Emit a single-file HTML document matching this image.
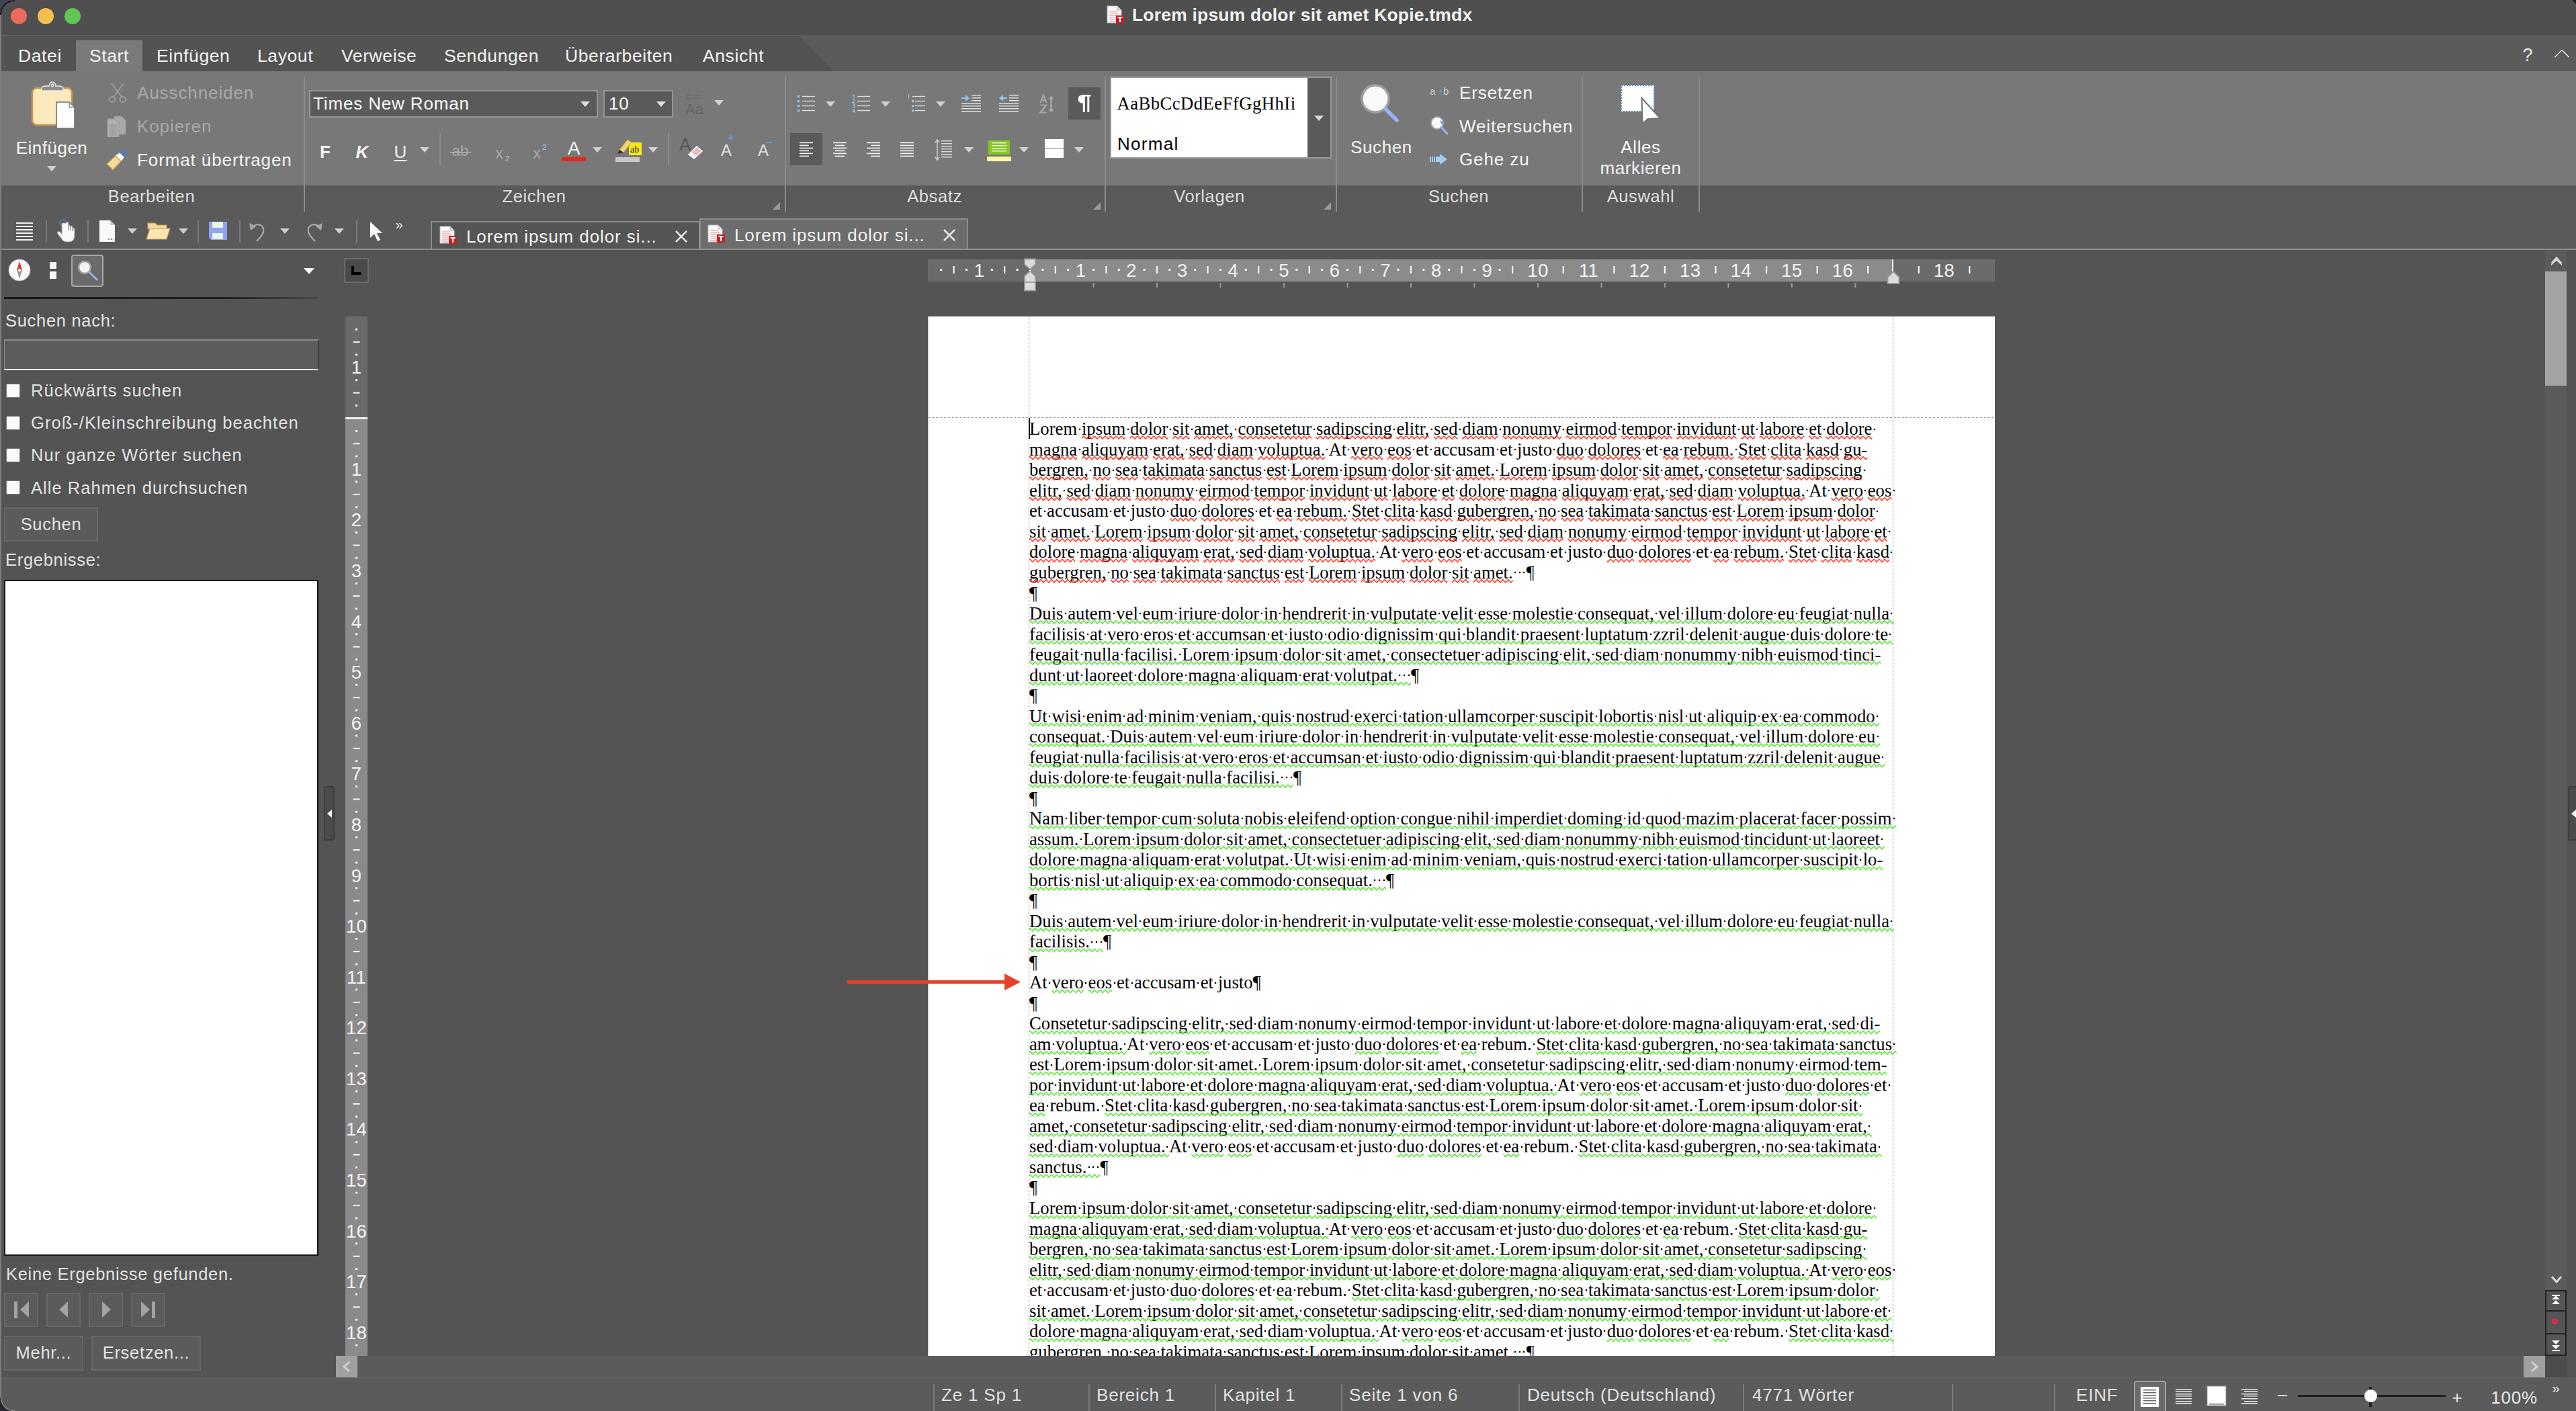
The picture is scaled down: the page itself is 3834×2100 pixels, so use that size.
<!DOCTYPE html>
<html><head><meta charset="utf-8"><style>
*{box-sizing:border-box}
html,body{margin:0;padding:0}
body{width:3834px;height:2100px;overflow:hidden;position:relative;background:#545454;font-family:"Liberation Sans",sans-serif;color:#eee}
.a{position:absolute}
.t{position:absolute;white-space:pre;line-height:1}
.sep{position:absolute;width:2px;background:#8a8a8a}
.tri{position:absolute;width:0;height:0;border-left:8px solid transparent;border-right:8px solid transparent;border-top:9px solid #d4d4d4}
#doc{position:absolute;left:1532.6px;top:622.4px;font-family:"Liberation Serif",serif;font-size:26.6667px;letter-spacing:0.03px;line-height:30.53px;color:#000;white-space:pre}
#doc div{height:30.53px}
#doc b{font-weight:normal;background:radial-gradient(circle,#000 0,#000 0.9px,rgba(0,0,0,0) 1.7px) no-repeat;background-size:4px 4px;background-position:50% 13.3px}
#doc u{text-decoration:none}
#doc s{text-decoration:none}
.ui{font-size:26px;color:#f2f2f2}
.lbl{font-size:25.5px;color:#dcdcdc}
</style></head><body>
<div class="a" style="left:0px;top:106px;width:3834px;height:170px;background:#787878;"></div>
<div class="a" style="left:0px;top:276px;width:3834px;height:95px;background:#5a5a5a;"></div>
<div class="a" style="left:0px;top:370px;width:3834px;height:2px;background:#8d8d8d;"></div>
<div class="a" style="left:452px;top:114px;width:2px;height:201px;background:#8c8c8c;"></div>
<div class="a" style="left:1168px;top:114px;width:2px;height:201px;background:#8c8c8c;"></div>
<div class="a" style="left:1644px;top:114px;width:2px;height:201px;background:#8c8c8c;"></div>
<div class="a" style="left:1988px;top:114px;width:2px;height:201px;background:#8c8c8c;"></div>
<div class="a" style="left:2354px;top:114px;width:2px;height:201px;background:#8c8c8c;"></div>
<div class="a" style="left:2528px;top:114px;width:2px;height:201px;background:#8c8c8c;"></div>
<div class="t" style="top:280.41px;font-size:25.5px;color:#dedede;letter-spacing:0.6px;left:-274.50px;width:1000px;text-align:center;">Bearbeiten</div>
<div class="t" style="top:280.41px;font-size:25.5px;color:#dedede;letter-spacing:0.6px;left:295.00px;width:1000px;text-align:center;">Zeichen</div>
<div class="t" style="top:280.41px;font-size:25.5px;color:#dedede;letter-spacing:0.6px;left:891.00px;width:1000px;text-align:center;">Absatz</div>
<div class="t" style="top:280.41px;font-size:25.5px;color:#dedede;letter-spacing:0.6px;left:1300.00px;width:1000px;text-align:center;">Vorlagen</div>
<div class="t" style="top:280.41px;font-size:25.5px;color:#dedede;letter-spacing:0.6px;left:1671.00px;width:1000px;text-align:center;">Suchen</div>
<div class="t" style="top:280.41px;font-size:25.5px;color:#dedede;letter-spacing:0.6px;left:1942.00px;width:1000px;text-align:center;">Auswahl</div>
<svg class="a" style="left:1150px;top:301px;" width="12" height="12" viewBox="0 0 12 12"><path d="M11 0V11H0z" fill="#9a9a9a"/></svg>
<svg class="a" style="left:1627px;top:301px;" width="12" height="12" viewBox="0 0 12 12"><path d="M11 0V11H0z" fill="#9a9a9a"/></svg>
<svg class="a" style="left:1970px;top:301px;" width="12" height="12" viewBox="0 0 12 12"><path d="M11 0V11H0z" fill="#9a9a9a"/></svg>
<svg class="a" style="left:44px;top:118px;" width="72" height="76" viewBox="0 0 72 76"><rect x="4" y="13" width="59" height="55" rx="7" fill="#fce9bd" stroke="#c9964d" stroke-width="2.5"/><path d="M18 17v-3c0-3 3-4 6-4h5c0-4 3-6 5-6s5 2 5 6h5c3 0 6 1 6 4v3z" fill="#8c8c8c" stroke="#e8e8e8" stroke-width="1.3"/><circle cx="34" cy="9" r="1.8" fill="none" stroke="#e8e8e8" stroke-width="1.2"/><path d="M40 34h19l8 8v31H40z" fill="#ffffff" stroke="#707070" stroke-width="1.6"/><path d="M59 34v8h8z" fill="#dddddd" stroke="#707070" stroke-width="1"/></svg>
<div class="t" style="top:206.59px;font-size:26px;color:#f6f6f6;letter-spacing:0.5px;left:-423.00px;width:1000px;text-align:center;">Einfügen</div>
<div class="a" style="left:70.0px;top:247.0px;width:0;height:0;border-left:7.0px solid transparent;border-right:7.0px solid transparent;border-top:8.0px solid #d0d0d0"></div>
<svg class="a" style="left:160px;top:122px;" width="30" height="32" viewBox="0 0 30 32"><g fill="none" stroke="#9a9a9a" stroke-width="2"><path d="M6 2L21 22M24 2L9 22"/><ellipse cx="7" cy="26" rx="4.5" ry="4"/><ellipse cx="23" cy="26" rx="4.5" ry="4"/></g></svg>
<div class="t" style="top:125.29px;font-size:26px;color:#a9a9a9;letter-spacing:0.9px;left:204.00px;">Ausschneiden</div>
<svg class="a" style="left:158px;top:172px;" width="34" height="32" viewBox="0 0 34 32"><path d="M12 1h11l6 6v21H12z" fill="#a8a8a8" stroke="#9a9a9a"/><path d="M2 5h11l6 6v21H2z" fill="#b0b0b0" stroke="#9a9a9a"/><g stroke="#8f8f8f" stroke-width="1"><path d="M4 14h12M4 17h12M4 20h12M4 23h12M4 26h12M4 29h12"/></g></svg>
<div class="t" style="top:175.29px;font-size:26px;color:#a9a9a9;letter-spacing:0.9px;left:204.00px;">Kopieren</div>
<svg class="a" style="left:158px;top:220px;" width="34" height="36" viewBox="0 0 34 36"><path d="M24 2L31 9L26 14L20 8z" fill="#4d7fb8"/><path d="M13 12L20 7L27 14L22 21z" fill="#fff" stroke="#888" stroke-width="0.8"/><path d="M1 24L14 12L22 20L10 33z" fill="#fbe3a4" stroke="#c9964d" stroke-width="1.5"/><path d="M5 27L16 16M8 30L19 19" stroke="#d9b064" stroke-width="1"/></svg>
<div class="t" style="top:225.29px;font-size:26px;color:#f6f6f6;letter-spacing:0.9px;left:204.00px;">Format übertragen</div>
<div class="a" style="left:460px;top:134px;width:430px;height:41px;background:#5a5a5a;border:2px solid #959595"></div>
<div class="t" style="top:140.59px;font-size:26px;color:#fafafa;letter-spacing:0.85px;left:466.00px;">Times New Roman</div>
<div class="a" style="left:863.5px;top:151.0px;width:0;height:0;border-left:7.5px solid transparent;border-right:7.5px solid transparent;border-top:8.0px solid #e0e0e0"></div>
<div class="a" style="left:898px;top:134px;width:104px;height:41px;background:#5a5a5a;border:2px solid #959595"></div>
<div class="t" style="top:140.59px;font-size:26px;color:#fafafa;letter-spacing:0.8px;left:906.00px;">10</div>
<div class="a" style="left:976.5px;top:151.0px;width:0;height:0;border-left:7.5px solid transparent;border-right:7.5px solid transparent;border-top:8.0px solid #e0e0e0"></div>
<svg class="a" style="left:1020px;top:138px;" width="36" height="34" viewBox="0 0 36 34"><path d="M2 4h22M2 4l4-3M24 8H2l4 3" fill="none" stroke="#6a6a6a" stroke-width="1.2"/><text x="0" y="32" font-family="Liberation Sans" font-size="22" fill="#646464">Aa</text></svg>
<div class="a" style="left:1063.0px;top:149.0px;width:0;height:0;border-left:7.0px solid transparent;border-right:7.0px solid transparent;border-top:8.0px solid #d0d0d0"></div>
<div class="t" style="top:212.99px;font-size:26px;color:#f6f6f6;font-weight:bold;left:-16.00px;width:1000px;text-align:center;">F</div>
<div class="t" style="top:212.99px;font-size:26px;color:#f6f6f6;font-weight:bold;left:39.00px;width:1000px;text-align:center;font-style:italic;">K</div>
<div class="t" style="top:212.99px;font-size:26px;color:#f6f6f6;left:96.00px;width:1000px;text-align:center;text-decoration:underline;text-underline-offset:3px;text-decoration-thickness:2px;">U</div>
<div class="a" style="left:625.0px;top:219.0px;width:0;height:0;border-left:7.0px solid transparent;border-right:7.0px solid transparent;border-top:8.0px solid #d0d0d0"></div>
<div class="a" style="left:654px;top:198px;width:2px;height:48px;background:#8c8c8c;"></div>
<div class="t" style="top:214.38px;font-size:22px;color:#a8a8a8;left:185.00px;width:1000px;text-align:center;">ab</div>
<div class="a" style="left:670px;top:226px;width:31px;height:2px;background:#a8a8a8;"></div>
<div class="t" style="top:215.68px;font-size:24px;color:#a8a8a8;left:243.00px;width:1000px;text-align:center;">x</div>
<div class="t" style="top:230.69px;font-size:11px;color:#9ecbf5;left:255.00px;width:1000px;text-align:center;">2</div>
<div class="t" style="top:215.68px;font-size:24px;color:#a8a8a8;left:299.00px;width:1000px;text-align:center;">x</div>
<div class="t" style="top:213.69px;font-size:11px;color:#9ecbf5;left:310.00px;width:1000px;text-align:center;">2</div>
<div class="t" style="top:207.30px;font-size:28px;color:#f6f6f6;left:354.00px;width:1000px;text-align:center;">A</div>
<div class="a" style="left:836px;top:234px;width:36px;height:6px;background:#e5261b;"></div>
<div class="a" style="left:882.0px;top:219.0px;width:0;height:0;border-left:7.0px solid transparent;border-right:7.0px solid transparent;border-top:8.0px solid #d0d0d0"></div>
<svg class="a" style="left:916px;top:206px;" width="40" height="36" viewBox="0 0 40 36"><rect x="20" y="6" width="19" height="19" fill="#f7e81d"/><text x="22" y="21" font-family="Liberation Serif" font-size="14" fill="#111">ab</text><path d="M6 17L18 2L24 6L12 21z" fill="#f3d56b" stroke="#c9a43a"/><path d="M6 17L3 23L12 21" fill="#333"/><rect x="0" y="28" width="36" height="7" fill="#c8c8c8"/></svg>
<div class="a" style="left:965.0px;top:219.0px;width:0;height:0;border-left:7.0px solid transparent;border-right:7.0px solid transparent;border-top:8.0px solid #d0d0d0"></div>
<div class="a" style="left:994px;top:198px;width:2px;height:48px;background:#8c8c8c;"></div>
<svg class="a" style="left:1011px;top:200px;" width="36" height="36" viewBox="0 0 36 36"><text x="0" y="24" font-family="Liberation Sans" font-size="26" fill="#555">A</text><path d="M14 30L26 18L34 25L22 36z" fill="#f2b7b7" stroke="#fff" stroke-width="1.5"/><path d="M14 30L18 26L26 33L22 36z" fill="#fff"/></svg>
<div class="t" style="top:212.18px;font-size:24px;color:#e0e0e0;left:581.00px;width:1000px;text-align:center;">A</div>
<div class="t" style="top:196.96px;font-size:16px;color:#5d98d9;font-weight:bold;left:588.00px;width:1000px;text-align:center;">+</div>
<div class="t" style="top:212.18px;font-size:24px;color:#e0e0e0;left:636.00px;width:1000px;text-align:center;">A</div>
<div class="a" style="left:1140px;top:210.5px;width:9px;height:2px;background:#5d98d9;"></div>
<svg class="a" style="left:1180px;top:135px;" width="40" height="36" viewBox="0 0 40 36"><rect x="6.8" y="7.0" width="3.2" height="3.2" fill="#8fc6f0"/><rect x="14" y="7.8" width="19" height="1.4" fill="#dcdcdc"/><rect x="6.8" y="14.0" width="3.2" height="3.2" fill="#8fc6f0"/><rect x="14" y="14.8" width="19" height="1.4" fill="#dcdcdc"/><rect x="6.8" y="21.0" width="3.2" height="3.2" fill="#8fc6f0"/><rect x="14" y="21.8" width="19" height="1.4" fill="#dcdcdc"/><rect x="6.8" y="28.0" width="3.2" height="3.2" fill="#8fc6f0"/><rect x="14" y="28.8" width="19" height="1.4" fill="#dcdcdc"/></svg>
<div class="a" style="left:1229.0px;top:151.0px;width:0;height:0;border-left:7.0px solid transparent;border-right:7.0px solid transparent;border-top:8.0px solid #d0d0d0"></div>
<svg class="a" style="left:1260px;top:135px;" width="40" height="36" viewBox="0 0 40 36"><path d="M1 1.5L2.5 0.5V6" transform="translate(8.5,5.5)" fill="none" stroke="#8fc6f0" stroke-width="1.2"/><path d="M0.5 1Q3.5 -0.5 3.5 2L0.5 5.5H3.8" transform="translate(8.5,12.5)" fill="none" stroke="#8fc6f0" stroke-width="1.2"/><path d="M0.5 0.5H3.5L1.8 2.5Q4 3 3.5 5Q2.5 6.5 0.5 5.5" transform="translate(8.5,19.5)" fill="none" stroke="#8fc6f0" stroke-width="1.2"/><path d="M3 0.5L0.5 4H4M3 2V6.5" transform="translate(8.5,26.5)" fill="none" stroke="#8fc6f0" stroke-width="1.2"/><rect x="16" y="7.8" width="19" height="1.4" fill="#dcdcdc"/><rect x="16" y="14.8" width="19" height="1.4" fill="#dcdcdc"/><rect x="16" y="21.8" width="19" height="1.4" fill="#dcdcdc"/><rect x="16" y="28.8" width="19" height="1.4" fill="#dcdcdc"/></svg>
<div class="a" style="left:1311.0px;top:151.0px;width:0;height:0;border-left:7.0px solid transparent;border-right:7.0px solid transparent;border-top:8.0px solid #d0d0d0"></div>
<svg class="a" style="left:1340px;top:135px;" width="40" height="36" viewBox="0 0 40 36"><path d="M1 1.5L2.5 0.5V6" transform="translate(10,5.5)" fill="none" stroke="#8fc6f0" stroke-width="1.2"/><rect x="17" y="14.0" width="3.2" height="3.2" fill="#8fc6f0"/><rect x="17" y="21.0" width="3.2" height="3.2" fill="#8fc6f0"/><rect x="17" y="28.0" width="3.2" height="3.2" fill="#8fc6f0"/><rect x="18" y="7.8" width="19" height="1.4" fill="#dcdcdc"/><rect x="22" y="14.8" width="15" height="1.4" fill="#dcdcdc"/><rect x="22" y="21.8" width="15" height="1.4" fill="#dcdcdc"/><rect x="22" y="28.8" width="15" height="1.4" fill="#dcdcdc"/></svg>
<div class="a" style="left:1393.0px;top:151.0px;width:0;height:0;border-left:7.0px solid transparent;border-right:7.0px solid transparent;border-top:8.0px solid #d0d0d0"></div>
<svg class="a" style="left:1431px;top:140px;" width="30" height="28" viewBox="0 0 30 28"><path d="M0 5h6v-4l6 5l-6 5v-4H0z" fill="#8fc6f0"/><rect x="15" y="1" width="14" height="1.5" fill="#ddd"/><rect x="15" y="5" width="14" height="1.5" fill="#ddd"/><rect x="15" y="9" width="14" height="1.5" fill="#ddd"/><rect x="0" y="13" width="29" height="1.5" fill="#ddd"/><rect x="0" y="17" width="29" height="1.5" fill="#ddd"/><rect x="0" y="21" width="29" height="1.5" fill="#ddd"/><rect x="0" y="25" width="29" height="1.5" fill="#ddd"/></svg>
<svg class="a" style="left:1487px;top:140px;" width="30" height="28" viewBox="0 0 30 28"><path d="M12 5H6v-4L0 6l6 5v-4h6z" fill="#8fc6f0"/><rect x="15" y="1" width="14" height="1.5" fill="#ddd"/><rect x="15" y="5" width="14" height="1.5" fill="#ddd"/><rect x="15" y="9" width="14" height="1.5" fill="#ddd"/><rect x="0" y="13" width="29" height="1.5" fill="#ddd"/><rect x="0" y="17" width="29" height="1.5" fill="#ddd"/><rect x="0" y="21" width="29" height="1.5" fill="#ddd"/><rect x="0" y="25" width="29" height="1.5" fill="#ddd"/></svg>
<svg class="a" style="left:1546px;top:139px;" width="26" height="32" viewBox="0 0 26 32"><path d="M2.5 14L7 2.5L11.5 14M4.3 10H9.7" fill="none" stroke="#a6a6a6" stroke-width="2.2"/><path d="M2.5 17.5H11L2.5 28.5H11.5" fill="none" stroke="#a6a6a6" stroke-width="2.2"/><path d="M18.5 7V25" stroke="#a6a6a6" stroke-width="2.6"/><path d="M14.5 8.5L18.5 3.5L22.5 8.5zM14.5 23.5L18.5 28.5L22.5 23.5z" fill="#a6a6a6"/></svg>
<div class="a" style="left:1590px;top:130px;width:48px;height:48px;background:#5a5a5a;"></div>
<svg class="a" style="left:1602px;top:138px;" width="24" height="32" viewBox="0 0 24 32"><path d="M12.5 3.5H8.5C4.5 3.5 2.8 6 2.8 9.5S4.8 15.5 9 15.5H10.8z" fill="#fff"/><rect x="9.8" y="3" width="3" height="26" fill="#fff"/><rect x="16.3" y="3" width="3" height="26" fill="#fff"/><rect x="9.8" y="3" width="11.5" height="2.6" fill="#fff"/></svg>
<div class="a" style="left:1176px;top:198px;width:48px;height:48px;background:#5a5a5a;"></div>
<svg class="a" style="left:1190px;top:211px;" width="22" height="24" viewBox="0 0 22 24"><rect x="0" y="0.6" width="20" height="1.6" fill="#f4f4f4"/><rect x="0" y="4.6" width="14" height="1.6" fill="#f4f4f4"/><rect x="0" y="8.6" width="20" height="1.6" fill="#f4f4f4"/><rect x="0" y="12.6" width="14" height="1.6" fill="#f4f4f4"/><rect x="0" y="16.6" width="20" height="1.6" fill="#f4f4f4"/><rect x="0" y="20.6" width="14" height="1.6" fill="#f4f4f4"/></svg>
<svg class="a" style="left:1240px;top:211px;" width="22" height="24" viewBox="0 0 22 24"><rect x="0.0" y="0.6" width="20" height="1.6" fill="#f4f4f4"/><rect x="3.0" y="4.6" width="14" height="1.6" fill="#f4f4f4"/><rect x="0.0" y="8.6" width="20" height="1.6" fill="#f4f4f4"/><rect x="3.0" y="12.6" width="14" height="1.6" fill="#f4f4f4"/><rect x="0.0" y="16.6" width="20" height="1.6" fill="#f4f4f4"/><rect x="3.0" y="20.6" width="14" height="1.6" fill="#f4f4f4"/></svg>
<svg class="a" style="left:1290px;top:211px;" width="22" height="24" viewBox="0 0 22 24"><rect x="0" y="0.6" width="20" height="1.6" fill="#f4f4f4"/><rect x="6" y="4.6" width="14" height="1.6" fill="#f4f4f4"/><rect x="0" y="8.6" width="20" height="1.6" fill="#f4f4f4"/><rect x="6" y="12.6" width="14" height="1.6" fill="#f4f4f4"/><rect x="0" y="16.6" width="20" height="1.6" fill="#f4f4f4"/><rect x="6" y="20.6" width="14" height="1.6" fill="#f4f4f4"/></svg>
<svg class="a" style="left:1340px;top:211px;" width="22" height="24" viewBox="0 0 22 24"><rect x="0" y="0.6" width="20" height="1.6" fill="#f4f4f4"/><rect x="0" y="4.6" width="20" height="1.6" fill="#f4f4f4"/><rect x="0" y="8.6" width="20" height="1.6" fill="#f4f4f4"/><rect x="0" y="12.6" width="20" height="1.6" fill="#f4f4f4"/><rect x="0" y="16.6" width="20" height="1.6" fill="#f4f4f4"/><rect x="0" y="20.6" width="20" height="1.6" fill="#f4f4f4"/></svg>
<svg class="a" style="left:1391px;top:206px;" width="30" height="34" viewBox="0 0 30 34"><path d="M4 2v30M1 6l3-4l3 4M1 28l3 4l3-4" fill="none" stroke="#cfcfcf" stroke-width="1.5"/><rect x="10" y="3" width="16" height="1.5" fill="#d8d8d8"/><rect x="10" y="7" width="16" height="1.5" fill="#d8d8d8"/><rect x="10" y="11" width="16" height="1.5" fill="#d8d8d8"/><rect x="10" y="15" width="16" height="1.5" fill="#d8d8d8"/><rect x="10" y="19" width="16" height="1.5" fill="#d8d8d8"/><rect x="10" y="23" width="16" height="1.5" fill="#d8d8d8"/><rect x="10" y="27" width="16" height="1.5" fill="#d8d8d8"/></svg>
<div class="a" style="left:1435.0px;top:219.0px;width:0;height:0;border-left:7.0px solid transparent;border-right:7.0px solid transparent;border-top:8.0px solid #d0d0d0"></div>
<svg class="a" style="left:1469px;top:208px;" width="38" height="33" viewBox="0 0 38 33"><rect x="2" y="1" width="32" height="21" fill="#85c91e"/><rect x="7" y="4" width="22" height="1.5" fill="#f0f0f0"/><rect x="7" y="8" width="22" height="1.5" fill="#f0f0f0"/><rect x="7" y="12" width="22" height="1.5" fill="#f0f0f0"/><rect x="7" y="16" width="22" height="1.5" fill="#f0f0f0"/><rect x="0" y="25" width="36" height="7" fill="#fdf6a6"/></svg>
<div class="a" style="left:1517.0px;top:219.0px;width:0;height:0;border-left:7.0px solid transparent;border-right:7.0px solid transparent;border-top:8.0px solid #d0d0d0"></div>
<svg class="a" style="left:1555px;top:207px;" width="30" height="29" viewBox="0 0 30 29"><rect x="0" y="0" width="28" height="28" fill="#fff"/><rect x="0" y="13" width="28" height="1.5" fill="#aaa"/></svg>
<div class="a" style="left:1599.0px;top:219.0px;width:0;height:0;border-left:7.0px solid transparent;border-right:7.0px solid transparent;border-top:8.0px solid #d0d0d0"></div>
<div class="a" style="left:1652px;top:114px;width:330px;height:122px;border:2px solid #9a9a9a;background:#5a5a5a"></div>
<div class="a" style="left:1654px;top:116px;width:292px;height:118px;background:#ffffff;"></div>
<div class="a" style="left:1956.0px;top:172.0px;width:0;height:0;border-left:7.0px solid transparent;border-right:7.0px solid transparent;border-top:8.0px solid #d8d8d8"></div>
<div class="t" style="top:140.72px;font-size:26.6px;font-family:'Liberation Serif',serif;color:#000;letter-spacing:0.5px;left:1662.50px;">AaBbCcDdEeFfGgHhIi</div>
<div class="t" style="top:200.99px;font-size:26px;color:#000;letter-spacing:1.3px;left:1663.00px;">Normal</div>
<svg class="a" style="left:2020px;top:120px;" width="70" height="70" viewBox="0 0 70 70"><circle cx="27" cy="27" r="20" fill="#fafafa" stroke="#a0a0a0" stroke-width="3.5"/><path d="M42 42L59 59" stroke="#97b1f3" stroke-width="6" stroke-linecap="round"/></svg>
<div class="t" style="top:205.99px;font-size:26px;color:#f6f6f6;letter-spacing:0.6px;left:1556.00px;width:1000px;text-align:center;">Suchen</div>
<svg class="a" style="left:2128px;top:123px;" width="30" height="24" viewBox="0 0 30 24"><text x="0" y="18" font-size="15" font-family="Liberation Sans" fill="#d0d0d0">a</text><text x="20" y="18" font-size="15" font-family="Liberation Sans" fill="#d0d0d0">b</text><path d="M9 12h6v-3l4 3.5l-4 3.5v-3H9z" fill="#5c9ad6"/></svg>
<div class="t" style="top:125.29px;font-size:26px;color:#f6f6f6;letter-spacing:0.9px;left:2172.00px;">Ersetzen</div>
<svg class="a" style="left:2128px;top:172px;" width="30" height="32" viewBox="0 0 30 32"><circle cx="11" cy="11" r="9" fill="#fafafa" stroke="#a5a5a5" stroke-width="2"/><path d="M17 17L26 27" stroke="#97b1f3" stroke-width="3" stroke-linecap="round"/><path d="M15 8l6 0l-3 6z" fill="#7aa4e8"/></svg>
<div class="t" style="top:174.99px;font-size:26px;color:#f6f6f6;letter-spacing:0.9px;left:2172.00px;">Weitersuchen</div>
<svg class="a" style="left:2128px;top:228px;" width="30" height="18" viewBox="0 0 30 18"><path d="M0 5h2v8H0zM3 5h2v8H3zM6 5h2v8H6zM9 5h6V1l11 8l-11 8v-4H9z" fill="#9ed0f5"/></svg>
<div class="t" style="top:224.49px;font-size:26px;color:#f6f6f6;letter-spacing:0.9px;left:2172.00px;">Gehe zu</div>
<svg class="a" style="left:2405px;top:122px;" width="80" height="68" viewBox="0 0 80 68"><rect x="8" y="5" width="49" height="39" fill="#fff" stroke="#4b86c5" stroke-width="2" stroke-dasharray="2 2"/><path d="M38.5 24L39.5 62L47.5 55L66 54z" fill="#fff" stroke="#707070" stroke-width="2"/></svg>
<div class="t" style="top:205.99px;font-size:26px;color:#f6f6f6;letter-spacing:0.6px;left:1942.00px;width:1000px;text-align:center;">Alles</div>
<div class="t" style="top:236.99px;font-size:26px;color:#f6f6f6;letter-spacing:0.6px;left:1942.00px;width:1000px;text-align:center;">markieren</div>
<div class="a" style="left:0px;top:0px;width:3834px;height:52px;background:#4f4f4f;"></div>
<div class="a" style="left:16px;top:12px;width:24px;height:24px;border-radius:50%;background:#ed6a5e"></div>
<div class="a" style="left:56px;top:12px;width:24px;height:24px;border-radius:50%;background:#f5bf4f"></div>
<div class="a" style="left:96px;top:12px;width:24px;height:24px;border-radius:50%;background:#61c554"></div>
<svg class="a" style="left:1646px;top:8px;" width="28" height="28" viewBox="0 0 28 28"><path d="M2 1h15l6 6v19H2z" fill="#fafafa" stroke="#bbb" stroke-width="1"/><path d="M17 1v6h6" fill="#ddd" stroke="#bbb" stroke-width="1"/><g stroke="#e88" stroke-width="1.2"><path d="M5 9h12M5 12h14M5 15h14M5 18h10M5 21h10M5 24h10"/></g><rect x="15" y="15" width="12" height="12" fill="#c8201c"/><path d="M17.5 18h7M21 18v7" stroke="#fff" stroke-width="2"/></svg>
<div class="t" style="top:9.15px;font-size:26.4px;color:#f4f4f4;font-weight:bold;letter-spacing:0.25px;left:1685.00px;">Lorem ipsum dolor sit amet Kopie.tmdx</div>
<div class="a" style="left:0px;top:52px;width:3834px;height:54px;background:#5b5b5b;"></div>
<svg class="a" style="left:0px;top:52px;" width="1242" height="54" viewBox="0 0 1242 54"><path d="M0 0H1187L1241 54H0z" fill="#535353"/></svg>
<div class="a" style="left:0px;top:52px;width:1190px;height:2px;background:#5e5e5e;"></div>
<div class="a" style="left:113px;top:60px;width:99px;height:46px;background:#7a7a7a;"></div>
<div class="t" style="top:70.17px;font-size:26.5px;color:#f3f3f3;letter-spacing:0.6px;left:27.00px;">Datei</div>
<div class="t" style="top:70.17px;font-size:26.5px;color:#f3f3f3;letter-spacing:0.6px;left:133.00px;">Start</div>
<div class="t" style="top:70.17px;font-size:26.5px;color:#f3f3f3;letter-spacing:0.6px;left:233.00px;">Einfügen</div>
<div class="t" style="top:70.17px;font-size:26.5px;color:#f3f3f3;letter-spacing:0.6px;left:383.00px;">Layout</div>
<div class="t" style="top:70.17px;font-size:26.5px;color:#f3f3f3;letter-spacing:0.6px;left:508.00px;">Verweise</div>
<div class="t" style="top:70.17px;font-size:26.5px;color:#f3f3f3;letter-spacing:0.6px;left:661.00px;">Sendungen</div>
<div class="t" style="top:70.17px;font-size:26.5px;color:#f3f3f3;letter-spacing:0.6px;left:841.00px;">Überarbeiten</div>
<div class="t" style="top:70.17px;font-size:26.5px;color:#f3f3f3;letter-spacing:0.6px;left:1046.00px;">Ansicht</div>
<div class="t" style="top:69.14px;font-size:27px;color:#f0f0f0;left:3262.00px;width:1000px;text-align:center;">?</div>
<svg class="a" style="left:3800px;top:70px;" width="26" height="18" viewBox="0 0 26 18"><path d="M2.5 15L13 4.5L23.5 15" fill="none" stroke="#eee" stroke-width="1.5"/></svg>
<div class="a" style="left:68px;top:327px;width:2px;height:34px;background:#7a7a7a;"></div>
<div class="a" style="left:130px;top:327px;width:2px;height:34px;background:#7a7a7a;"></div>
<div class="a" style="left:294px;top:327px;width:2px;height:34px;background:#7a7a7a;"></div>
<div class="a" style="left:356px;top:327px;width:2px;height:34px;background:#7a7a7a;"></div>
<div class="a" style="left:530px;top:327px;width:2px;height:34px;background:#7a7a7a;"></div>
<svg class="a" style="left:22px;top:328px;" width="30" height="32" viewBox="0 0 30 32"><rect x="2" y="3" width="25" height="2" fill="#f0f0f0"/><rect x="2" y="8" width="25" height="2" fill="#f0f0f0"/><rect x="2" y="13" width="25" height="2" fill="#f0f0f0"/><rect x="2" y="18" width="25" height="2" fill="#f0f0f0"/><rect x="2" y="23" width="25" height="2" fill="#f0f0f0"/><rect x="2" y="28" width="25" height="2" fill="#f0f0f0"/></svg>
<svg class="a" style="left:84px;top:324px;" width="30" height="38" viewBox="0 0 30 38"><circle cx="10" cy="8" r="5" fill="none" stroke="#5a7fd0" stroke-width="1.5"/><path d="M8 8v16l-3-3c-2-2-5 0-3 3l6 8c2 3 4 4 8 4h3c5 0 8-4 8-9V17c0-2-3-2-3 0v3V14c0-2-3-2-3 0v5V13c0-2-3-2-3 0v6V8c0-2-3-2-3 0z" fill="#fafafa" stroke="#999" stroke-width="1"/></svg>
<svg class="a" style="left:146px;top:327px;" width="28" height="34" viewBox="0 0 28 34"><path d="M2 1h16l7 7v25H2z" fill="#fafafa"/><path d="M18 1v7h7" fill="#ccc"/><path d="M15 29h2M19 29h2M23 29h1" stroke="#555" stroke-width="1.5"/></svg>
<div class="a" style="left:190.0px;top:340.0px;width:0;height:0;border-left:7.0px solid transparent;border-right:7.0px solid transparent;border-top:8.0px solid #cfcfcf"></div>
<svg class="a" style="left:217px;top:329px;" width="38" height="30" viewBox="0 0 38 30"><path d="M3 3h11l3 3h14v6H3z" fill="#f4dda4" stroke="#c49a4b" stroke-width="1.2"/><path d="M1 27L6 11H36L31 27z" fill="#fbe7b3" stroke="#c49a4b" stroke-width="1.2"/></svg>
<div class="a" style="left:266.0px;top:340.0px;width:0;height:0;border-left:7.0px solid transparent;border-right:7.0px solid transparent;border-top:8.0px solid #cfcfcf"></div>
<svg class="a" style="left:310px;top:329px;" width="30" height="30" viewBox="0 0 30 30"><rect x="1" y="1" width="27" height="27" rx="1" fill="#8aa6f0"/><rect x="6" y="1" width="16" height="9" fill="#f0f0f0"/><rect x="6" y="18" width="16" height="9" fill="#f0f0f0"/><path d="M1 25l3 3H1z" fill="#555"/></svg>
<svg class="a" style="left:370px;top:328px;" width="28" height="32" viewBox="0 0 28 32"><path d="M6 10C12 3 24 6 22 17C21 22 16 27 12 31" fill="none" stroke="#a8a8a8" stroke-width="2.2"/><path d="M1 4L3 15L11 9z" fill="#a8a8a8"/></svg>
<div class="a" style="left:417.0px;top:340.0px;width:0;height:0;border-left:7.0px solid transparent;border-right:7.0px solid transparent;border-top:8.0px solid #cfcfcf"></div>
<svg class="a" style="left:453px;top:328px;" width="28" height="32" viewBox="0 0 28 32"><path d="M22 10C16 3 4 6 6 17C7 22 12 27 16 31" fill="none" stroke="#a8a8a8" stroke-width="2.2"/><path d="M27 4L25 15L17 9z" fill="#a8a8a8"/></svg>
<div class="a" style="left:498.0px;top:340.0px;width:0;height:0;border-left:7.0px solid transparent;border-right:7.0px solid transparent;border-top:8.0px solid #cfcfcf"></div>
<svg class="a" style="left:548px;top:328px;" width="26" height="34" viewBox="0 0 26 34"><path d="M3 2L3 26L9 20L14 31L18 29L13 19L21 19z" fill="#fafafa"/></svg>
<div class="t" style="top:324.07px;font-size:20px;color:#eee;left:94.00px;width:1000px;text-align:center;">»</div>
<div class="a" style="left:641px;top:329px;width:401px;height:41px;background:#555555;border:2px solid #8c8c8c;border-bottom:none"></div>
<div class="a" style="left:1041px;top:325px;width:400px;height:45px;background:#6d6d6d;border:2px solid #8c8c8c;border-bottom:none"></div>
<div class="a" style="left:0px;top:370px;width:3834px;height:2px;background:#8d8d8d;"></div>
<svg class="a" style="left:653px;top:336px;" width="28" height="28" viewBox="0 0 28 28"><path d="M2 1h15l6 6v19H2z" fill="#fafafa" stroke="#bbb" stroke-width="1"/><path d="M17 1v6h6" fill="#ddd" stroke="#bbb" stroke-width="1"/><g stroke="#e88" stroke-width="1.2"><path d="M5 9h12M5 12h14M5 15h14M5 18h10M5 21h10M5 24h10"/></g><rect x="15" y="15" width="12" height="12" fill="#c8201c"/><path d="M17.5 18h7M21 18v7" stroke="#fff" stroke-width="2"/></svg>
<svg class="a" style="left:1052px;top:334px;" width="28" height="28" viewBox="0 0 28 28"><path d="M2 1h15l6 6v19H2z" fill="#fafafa" stroke="#bbb" stroke-width="1"/><path d="M17 1v6h6" fill="#ddd" stroke="#bbb" stroke-width="1"/><g stroke="#e88" stroke-width="1.2"><path d="M5 9h12M5 12h14M5 15h14M5 18h10M5 21h10M5 24h10"/></g><rect x="15" y="15" width="12" height="12" fill="#c8201c"/><path d="M17.5 18h7M21 18v7" stroke="#fff" stroke-width="2"/></svg>
<div class="t" style="top:338.99px;font-size:26px;color:#f4f4f4;letter-spacing:0.9px;left:694.00px;">Lorem ipsum dolor si...</div>
<div class="t" style="top:336.99px;font-size:26px;color:#f4f4f4;letter-spacing:0.9px;left:1093.00px;">Lorem ipsum dolor si...</div>
<svg class="a" style="left:1003px;top:341px;" width="22" height="22" viewBox="0 0 22 22"><path d="M3 3L19 19M19 3L3 19" stroke="#e6e6e6" stroke-width="2.5"/></svg>
<svg class="a" style="left:1402px;top:339px;" width="22" height="22" viewBox="0 0 22 22"><path d="M3 3L19 19M19 3L3 19" stroke="#e6e6e6" stroke-width="2.5"/></svg>
<svg class="a" style="left:12px;top:385px;" width="36" height="36" viewBox="0 0 36 36"><circle cx="17" cy="17" r="16" fill="#fafafa" stroke="#bbb" stroke-width="1"/><path d="M17 4L13 17h8z" fill="#d83a2c"/><path d="M17 30L13 17h8z" fill="#9a9a9a"/><circle cx="17" cy="17" r="2" fill="#fff"/></svg>
<div class="a" style="left:74px;top:390px;width:10px;height:10px;background:#fafafa;"></div>
<div class="a" style="left:74px;top:404px;width:10px;height:11px;background:#fafafa;"></div>
<div class="a" style="left:106px;top:379px;width:48px;height:48px;background:#6a6a6a;border:2px solid #a8a8a8;border-radius:4px"></div>
<svg class="a" style="left:112px;top:385px;" width="36" height="36" viewBox="0 0 36 36"><circle cx="14" cy="13" r="9" fill="#f4f4f4" stroke="#a0a0a0" stroke-width="2.5"/><path d="M21 20L32 31" stroke="#97b1f3" stroke-width="3" stroke-linecap="round"/></svg>
<div class="a" style="left:452.0px;top:398.5px;width:0;height:0;border-left:8.0px solid transparent;border-right:8.0px solid transparent;border-top:9.0px solid #fafafa"></div>
<div class="a" style="left:6px;top:442px;width:468px;height:3px;background:linear-gradient(90deg,#151515,#1e1e1e 70%,#4a4a4a)"></div>
<div class="t" style="top:465.41px;font-size:25.5px;color:#e2e2e2;letter-spacing:0.7px;left:8.00px;">Suchen nach:</div>
<div class="a" style="left:6px;top:505px;width:468px;height:46px;background:#5c5c5c;border-top:2px solid #8a8a8a;border-left:1px solid #8a8a8a;border-bottom:2px solid #f0f0f0;border-right:1px solid #222"></div>
<div class="a" style="left:9px;top:570.5px;width:21px;height:21px;background:#fafafa;border:1px solid #7a7a7a;border-radius:2px"></div>
<div class="t" style="top:568.91px;font-size:25.5px;color:#e2e2e2;letter-spacing:1.05px;left:46.00px;">Rückwärts suchen</div>
<div class="a" style="left:9px;top:618.7px;width:21px;height:21px;background:#fafafa;border:1px solid #7a7a7a;border-radius:2px"></div>
<div class="t" style="top:617.11px;font-size:25.5px;color:#e2e2e2;letter-spacing:1.05px;left:46.00px;">Groß-/Kleinschreibung beachten</div>
<div class="a" style="left:9px;top:666.9px;width:21px;height:21px;background:#fafafa;border:1px solid #7a7a7a;border-radius:2px"></div>
<div class="t" style="top:665.31px;font-size:25.5px;color:#e2e2e2;letter-spacing:1.05px;left:46.00px;">Nur ganze Wörter suchen</div>
<div class="a" style="left:9px;top:715.1px;width:21px;height:21px;background:#fafafa;border:1px solid #7a7a7a;border-radius:2px"></div>
<div class="t" style="top:713.51px;font-size:25.5px;color:#e2e2e2;letter-spacing:1.05px;left:46.00px;">Alle Rahmen durchsuchen</div>
<div class="a" style="left:6px;top:755px;width:140px;height:51px;background:#5b5b5b;border:2px solid #676767"></div>
<div class="t" style="top:768.41px;font-size:25.5px;color:#e2e2e2;letter-spacing:0.7px;left:-424.00px;width:1000px;text-align:center;">Suchen</div>
<div class="t" style="top:821.41px;font-size:25.5px;color:#e2e2e2;letter-spacing:0.7px;left:8.00px;">Ergebnisse:</div>
<div class="a" style="left:6px;top:863px;width:468px;height:1006px;background:#fff;border:2px solid #161616"></div>
<div class="t" style="top:1884.41px;font-size:25.5px;color:#e2e2e2;letter-spacing:0.7px;left:9.00px;">Keine Ergebnisse gefunden.</div>
<div class="a" style="left:6px;top:1924px;width:51px;height:51px;background:#5b5b5b;border:2px solid #676767"></div>
<div class="a" style="left:69px;top:1924px;width:51px;height:51px;background:#5b5b5b;border:2px solid #676767"></div>
<div class="a" style="left:132px;top:1924px;width:51px;height:51px;background:#5b5b5b;border:2px solid #676767"></div>
<div class="a" style="left:195px;top:1924px;width:51px;height:51px;background:#5b5b5b;border:2px solid #676767"></div>
<div class="a" style="left:21px;top:1937px;width:5px;height:25px;background:#a3a3a3;"></div>
<div class="a" style="left:29.5px;top:1937.0px;width:0;height:0;border-top:12.5px solid transparent;border-bottom:12.5px solid transparent;border-right:13.0px solid #a3a3a3"></div>
<div class="a" style="left:87.5px;top:1937.0px;width:0;height:0;border-top:12.5px solid transparent;border-bottom:12.5px solid transparent;border-right:13.0px solid #a3a3a3"></div>
<div class="a" style="left:151.5px;top:1937.0px;width:0;height:0;border-top:12.5px solid transparent;border-bottom:12.5px solid transparent;border-left:13.0px solid #a3a3a3"></div>
<div class="a" style="left:209.5px;top:1937.0px;width:0;height:0;border-top:12.5px solid transparent;border-bottom:12.5px solid transparent;border-left:13.0px solid #a3a3a3"></div>
<div class="a" style="left:226px;top:1937px;width:5px;height:25px;background:#a3a3a3;"></div>
<div class="a" style="left:6px;top:1988px;width:118px;height:52px;background:#5b5b5b;border:2px solid #676767"></div>
<div class="t" style="top:2001.41px;font-size:25.5px;color:#e2e2e2;letter-spacing:0.7px;left:-435.00px;width:1000px;text-align:center;">Mehr...</div>
<div class="a" style="left:136px;top:1988px;width:163px;height:52px;background:#5b5b5b;border:2px solid #676767"></div>
<div class="t" style="top:2001.41px;font-size:25.5px;color:#e2e2e2;letter-spacing:0.7px;left:-282.50px;width:1000px;text-align:center;">Ersetzen...</div>
<div class="a" style="left:482px;top:1170px;width:16px;height:81px;background:#4b4c4a;border:2px solid #3e3e3e;border-radius:3px"></div>
<div class="a" style="left:486.5px;top:1205.0px;width:0;height:0;border-top:6.0px solid transparent;border-bottom:6.0px solid transparent;border-right:7.0px solid #fafafa"></div>
<div class="a" style="left:512px;top:384px;width:37px;height:37px;background:#4a4a4a;border:2px solid #6b6b6b"></div>
<svg class="a" style="left:520px;top:392px;" width="22" height="22" viewBox="0 0 22 22"><path d="M5 4v11h12" fill="none" stroke="#000" stroke-width="4"/></svg>
<div class="a" style="left:514px;top:471px;width:33px;height:151px;background:#6a6a6a;"></div>
<div class="a" style="left:514px;top:622px;width:33px;height:1396px;background:#8a8a8a;"></div>
<div class="a" style="left:514px;top:621px;width:33px;height:3px;background:#f4f4f4;"></div>
<svg class="a" style="left:514px;top:471px;" width="33" height="1547" viewBox="0 0 33 1547"><rect x="15.0" y="17.7" width="3" height="3" fill="#f4f4f4"/><rect x="11.5" y="37.1" width="10" height="2" fill="#f4f4f4"/><rect x="15.0" y="55.5" width="3" height="3" fill="#f4f4f4"/><rect x="15.0" y="93.3" width="3" height="3" fill="#f4f4f4"/><rect x="11.5" y="112.7" width="10" height="2" fill="#f4f4f4"/><rect x="15.0" y="131.1" width="3" height="3" fill="#f4f4f4"/><rect x="15.0" y="168.9" width="3" height="3" fill="#f4f4f4"/><rect x="11.5" y="188.3" width="10" height="2" fill="#f4f4f4"/><rect x="15.0" y="206.7" width="3" height="3" fill="#f4f4f4"/><rect x="15.0" y="244.5" width="3" height="3" fill="#f4f4f4"/><rect x="11.5" y="263.9" width="10" height="2" fill="#f4f4f4"/><rect x="15.0" y="282.3" width="3" height="3" fill="#f4f4f4"/><rect x="15.0" y="320.1" width="3" height="3" fill="#f4f4f4"/><rect x="11.5" y="339.5" width="10" height="2" fill="#f4f4f4"/><rect x="15.0" y="357.9" width="3" height="3" fill="#f4f4f4"/><rect x="15.0" y="395.7" width="3" height="3" fill="#f4f4f4"/><rect x="11.5" y="415.1" width="10" height="2" fill="#f4f4f4"/><rect x="15.0" y="433.5" width="3" height="3" fill="#f4f4f4"/><rect x="15.0" y="471.3" width="3" height="3" fill="#f4f4f4"/><rect x="11.5" y="490.7" width="10" height="2" fill="#f4f4f4"/><rect x="15.0" y="509.1" width="3" height="3" fill="#f4f4f4"/><rect x="15.0" y="546.8" width="3" height="3" fill="#f4f4f4"/><rect x="11.5" y="566.2" width="10" height="2" fill="#f4f4f4"/><rect x="15.0" y="584.6" width="3" height="3" fill="#f4f4f4"/><rect x="15.0" y="622.4" width="3" height="3" fill="#f4f4f4"/><rect x="11.5" y="641.8" width="10" height="2" fill="#f4f4f4"/><rect x="15.0" y="660.2" width="3" height="3" fill="#f4f4f4"/><rect x="15.0" y="698.0" width="3" height="3" fill="#f4f4f4"/><rect x="11.5" y="717.4" width="10" height="2" fill="#f4f4f4"/><rect x="15.0" y="735.8" width="3" height="3" fill="#f4f4f4"/><rect x="15.0" y="773.6" width="3" height="3" fill="#f4f4f4"/><rect x="11.5" y="793.0" width="10" height="2" fill="#f4f4f4"/><rect x="15.0" y="811.4" width="3" height="3" fill="#f4f4f4"/><rect x="15.0" y="849.2" width="3" height="3" fill="#f4f4f4"/><rect x="11.5" y="868.6" width="10" height="2" fill="#f4f4f4"/><rect x="15.0" y="887.0" width="3" height="3" fill="#f4f4f4"/><rect x="15.0" y="924.8" width="3" height="3" fill="#f4f4f4"/><rect x="11.5" y="944.2" width="10" height="2" fill="#f4f4f4"/><rect x="15.0" y="962.6" width="3" height="3" fill="#f4f4f4"/><rect x="15.0" y="1000.4" width="3" height="3" fill="#f4f4f4"/><rect x="11.5" y="1019.8" width="10" height="2" fill="#f4f4f4"/><rect x="15.0" y="1038.2" width="3" height="3" fill="#f4f4f4"/><rect x="15.0" y="1076.0" width="3" height="3" fill="#f4f4f4"/><rect x="11.5" y="1095.4" width="10" height="2" fill="#f4f4f4"/><rect x="15.0" y="1113.8" width="3" height="3" fill="#f4f4f4"/><rect x="15.0" y="1151.6" width="3" height="3" fill="#f4f4f4"/><rect x="11.5" y="1171.0" width="10" height="2" fill="#f4f4f4"/><rect x="15.0" y="1189.4" width="3" height="3" fill="#f4f4f4"/><rect x="15.0" y="1227.2" width="3" height="3" fill="#f4f4f4"/><rect x="11.5" y="1246.6" width="10" height="2" fill="#f4f4f4"/><rect x="15.0" y="1265.0" width="3" height="3" fill="#f4f4f4"/><rect x="15.0" y="1302.7" width="3" height="3" fill="#f4f4f4"/><rect x="11.5" y="1322.1" width="10" height="2" fill="#f4f4f4"/><rect x="15.0" y="1340.5" width="3" height="3" fill="#f4f4f4"/><rect x="15.0" y="1378.3" width="3" height="3" fill="#f4f4f4"/><rect x="11.5" y="1397.7" width="10" height="2" fill="#f4f4f4"/><rect x="15.0" y="1416.1" width="3" height="3" fill="#f4f4f4"/><rect x="15.0" y="1453.9" width="3" height="3" fill="#f4f4f4"/><rect x="11.5" y="1473.3" width="10" height="2" fill="#f4f4f4"/><rect x="15.0" y="1491.7" width="3" height="3" fill="#f4f4f4"/><rect x="15.0" y="1529.5" width="3" height="3" fill="#f4f4f4"/></svg>
<div class="t" style="top:532.72px;font-size:27.5px;color:#f4f4f4;left:30.50px;width:1000px;text-align:center;">1</div>
<div class="t" style="top:684.81px;font-size:27.5px;color:#f4f4f4;letter-spacing:0.3px;left:30.50px;width:1000px;text-align:center;">1</div>
<div class="t" style="top:760.40px;font-size:27.5px;color:#f4f4f4;letter-spacing:0.3px;left:30.50px;width:1000px;text-align:center;">2</div>
<div class="t" style="top:835.99px;font-size:27.5px;color:#f4f4f4;letter-spacing:0.3px;left:30.50px;width:1000px;text-align:center;">3</div>
<div class="t" style="top:911.58px;font-size:27.5px;color:#f4f4f4;letter-spacing:0.3px;left:30.50px;width:1000px;text-align:center;">4</div>
<div class="t" style="top:987.17px;font-size:27.5px;color:#f4f4f4;letter-spacing:0.3px;left:30.50px;width:1000px;text-align:center;">5</div>
<div class="t" style="top:1062.76px;font-size:27.5px;color:#f4f4f4;letter-spacing:0.3px;left:30.50px;width:1000px;text-align:center;">6</div>
<div class="t" style="top:1138.35px;font-size:27.5px;color:#f4f4f4;letter-spacing:0.3px;left:30.50px;width:1000px;text-align:center;">7</div>
<div class="t" style="top:1213.94px;font-size:27.5px;color:#f4f4f4;letter-spacing:0.3px;left:30.50px;width:1000px;text-align:center;">8</div>
<div class="t" style="top:1289.53px;font-size:27.5px;color:#f4f4f4;letter-spacing:0.3px;left:30.50px;width:1000px;text-align:center;">9</div>
<div class="t" style="top:1365.12px;font-size:27.5px;color:#f4f4f4;letter-spacing:0.3px;left:30.50px;width:1000px;text-align:center;">10</div>
<div class="t" style="top:1440.71px;font-size:27.5px;color:#f4f4f4;letter-spacing:0.3px;left:30.50px;width:1000px;text-align:center;">11</div>
<div class="t" style="top:1516.30px;font-size:27.5px;color:#f4f4f4;letter-spacing:0.3px;left:30.50px;width:1000px;text-align:center;">12</div>
<div class="t" style="top:1591.89px;font-size:27.5px;color:#f4f4f4;letter-spacing:0.3px;left:30.50px;width:1000px;text-align:center;">13</div>
<div class="t" style="top:1667.48px;font-size:27.5px;color:#f4f4f4;letter-spacing:0.3px;left:30.50px;width:1000px;text-align:center;">14</div>
<div class="t" style="top:1743.07px;font-size:27.5px;color:#f4f4f4;letter-spacing:0.3px;left:30.50px;width:1000px;text-align:center;">15</div>
<div class="t" style="top:1818.66px;font-size:27.5px;color:#f4f4f4;letter-spacing:0.3px;left:30.50px;width:1000px;text-align:center;">16</div>
<div class="t" style="top:1894.25px;font-size:27.5px;color:#f4f4f4;letter-spacing:0.3px;left:30.50px;width:1000px;text-align:center;">17</div>
<div class="t" style="top:1969.84px;font-size:27.5px;color:#f4f4f4;letter-spacing:0.3px;left:30.50px;width:1000px;text-align:center;">18</div>
<div class="a" style="left:1381px;top:386px;width:1588px;height:33px;background:#6b6b6b;"></div>
<div class="a" style="left:1532px;top:386px;width:1285px;height:33px;background:#8b8b8b;"></div>
<svg class="a" style="left:1381px;top:386px;" width="1588" height="46" viewBox="0 0 1588 46"><rect x="18.2" y="14" width="3" height="3" fill="#f4f4f4"/><rect x="37.5" y="10" width="2.2" height="11" fill="#f4f4f4"/><rect x="56.0" y="14" width="3" height="3" fill="#f4f4f4"/><rect x="93.8" y="14" width="3" height="3" fill="#f4f4f4"/><rect x="113.1" y="10" width="2.2" height="11" fill="#f4f4f4"/><rect x="131.6" y="14" width="3" height="3" fill="#f4f4f4"/><rect x="169.4" y="14" width="3" height="3" fill="#f4f4f4"/><rect x="188.7" y="10" width="2.2" height="11" fill="#f4f4f4"/><rect x="207.2" y="14" width="3" height="3" fill="#f4f4f4"/><rect x="245.0" y="14" width="3" height="3" fill="#f4f4f4"/><rect x="264.3" y="10" width="2.2" height="11" fill="#f4f4f4"/><rect x="282.8" y="14" width="3" height="3" fill="#f4f4f4"/><rect x="320.6" y="14" width="3" height="3" fill="#f4f4f4"/><rect x="339.9" y="10" width="2.2" height="11" fill="#f4f4f4"/><rect x="358.4" y="14" width="3" height="3" fill="#f4f4f4"/><rect x="396.2" y="14" width="3" height="3" fill="#f4f4f4"/><rect x="415.5" y="10" width="2.2" height="11" fill="#f4f4f4"/><rect x="434.0" y="14" width="3" height="3" fill="#f4f4f4"/><rect x="471.8" y="14" width="3" height="3" fill="#f4f4f4"/><rect x="491.1" y="10" width="2.2" height="11" fill="#f4f4f4"/><rect x="509.6" y="14" width="3" height="3" fill="#f4f4f4"/><rect x="547.3" y="14" width="3" height="3" fill="#f4f4f4"/><rect x="566.6" y="10" width="2.2" height="11" fill="#f4f4f4"/><rect x="585.1" y="14" width="3" height="3" fill="#f4f4f4"/><rect x="622.9" y="14" width="3" height="3" fill="#f4f4f4"/><rect x="642.2" y="10" width="2.2" height="11" fill="#f4f4f4"/><rect x="660.7" y="14" width="3" height="3" fill="#f4f4f4"/><rect x="698.5" y="14" width="3" height="3" fill="#f4f4f4"/><rect x="717.8" y="10" width="2.2" height="11" fill="#f4f4f4"/><rect x="736.3" y="14" width="3" height="3" fill="#f4f4f4"/><rect x="774.1" y="14" width="3" height="3" fill="#f4f4f4"/><rect x="793.4" y="10" width="2.2" height="11" fill="#f4f4f4"/><rect x="811.9" y="14" width="3" height="3" fill="#f4f4f4"/><rect x="849.7" y="14" width="3" height="3" fill="#f4f4f4"/><rect x="869.0" y="10" width="2.2" height="11" fill="#f4f4f4"/><rect x="944.6" y="10" width="2.2" height="11" fill="#f4f4f4"/><rect x="1020.2" y="10" width="2.2" height="11" fill="#f4f4f4"/><rect x="1095.8" y="10" width="2.2" height="11" fill="#f4f4f4"/><rect x="1171.4" y="10" width="2.2" height="11" fill="#f4f4f4"/><rect x="1247.0" y="10" width="2.2" height="11" fill="#f4f4f4"/><rect x="1322.5" y="10" width="2.2" height="11" fill="#f4f4f4"/><rect x="1398.1" y="10" width="2.2" height="11" fill="#f4f4f4"/><rect x="1473.7" y="10" width="2.2" height="11" fill="#f4f4f4"/><rect x="1549.3" y="10" width="2.2" height="11" fill="#f4f4f4"/><rect x="245.5" y="35" width="2" height="7" fill="#999"/><rect x="340.0" y="35" width="2" height="7" fill="#999"/><rect x="434.5" y="35" width="2" height="7" fill="#999"/><rect x="529.0" y="35" width="2" height="7" fill="#999"/><rect x="623.5" y="35" width="2" height="7" fill="#999"/><rect x="717.9" y="35" width="2" height="7" fill="#999"/><rect x="812.4" y="35" width="2" height="7" fill="#999"/><rect x="906.9" y="35" width="2" height="7" fill="#999"/><rect x="1001.4" y="35" width="2" height="7" fill="#999"/><rect x="1095.9" y="35" width="2" height="7" fill="#999"/><rect x="1190.4" y="35" width="2" height="7" fill="#999"/><rect x="1284.9" y="35" width="2" height="7" fill="#999"/><rect x="1379.4" y="35" width="2" height="7" fill="#999"/></svg>
<div class="t" style="top:388.72px;font-size:27.5px;color:#f4f4f4;left:957.50px;width:1000px;text-align:center;">1</div>
<div class="t" style="top:388.72px;font-size:27.5px;color:#f4f4f4;letter-spacing:0.3px;left:1108.59px;width:1000px;text-align:center;">1</div>
<div class="t" style="top:388.72px;font-size:27.5px;color:#f4f4f4;letter-spacing:0.3px;left:1184.18px;width:1000px;text-align:center;">2</div>
<div class="t" style="top:388.72px;font-size:27.5px;color:#f4f4f4;letter-spacing:0.3px;left:1259.77px;width:1000px;text-align:center;">3</div>
<div class="t" style="top:388.72px;font-size:27.5px;color:#f4f4f4;letter-spacing:0.3px;left:1335.36px;width:1000px;text-align:center;">4</div>
<div class="t" style="top:388.72px;font-size:27.5px;color:#f4f4f4;letter-spacing:0.3px;left:1410.95px;width:1000px;text-align:center;">5</div>
<div class="t" style="top:388.72px;font-size:27.5px;color:#f4f4f4;letter-spacing:0.3px;left:1486.54px;width:1000px;text-align:center;">6</div>
<div class="t" style="top:388.72px;font-size:27.5px;color:#f4f4f4;letter-spacing:0.3px;left:1562.13px;width:1000px;text-align:center;">7</div>
<div class="t" style="top:388.72px;font-size:27.5px;color:#f4f4f4;letter-spacing:0.3px;left:1637.72px;width:1000px;text-align:center;">8</div>
<div class="t" style="top:388.72px;font-size:27.5px;color:#f4f4f4;letter-spacing:0.3px;left:1713.31px;width:1000px;text-align:center;">9</div>
<div class="t" style="top:388.72px;font-size:27.5px;color:#f4f4f4;letter-spacing:0.3px;left:1788.90px;width:1000px;text-align:center;">10</div>
<div class="t" style="top:388.72px;font-size:27.5px;color:#f4f4f4;letter-spacing:0.3px;left:1864.49px;width:1000px;text-align:center;">11</div>
<div class="t" style="top:388.72px;font-size:27.5px;color:#f4f4f4;letter-spacing:0.3px;left:1940.08px;width:1000px;text-align:center;">12</div>
<div class="t" style="top:388.72px;font-size:27.5px;color:#f4f4f4;letter-spacing:0.3px;left:2015.67px;width:1000px;text-align:center;">13</div>
<div class="t" style="top:388.72px;font-size:27.5px;color:#f4f4f4;letter-spacing:0.3px;left:2091.26px;width:1000px;text-align:center;">14</div>
<div class="t" style="top:388.72px;font-size:27.5px;color:#f4f4f4;letter-spacing:0.3px;left:2166.85px;width:1000px;text-align:center;">15</div>
<div class="t" style="top:388.72px;font-size:27.5px;color:#f4f4f4;letter-spacing:0.3px;left:2242.44px;width:1000px;text-align:center;">16</div>
<div class="t" style="top:388.72px;font-size:27.5px;color:#f4f4f4;letter-spacing:0.3px;left:2393.62px;width:1000px;text-align:center;">18</div>
<svg class="a" style="left:1521px;top:383px;" width="24" height="52" viewBox="0 0 24 52"><path d="M4 2.5H20V10.5L12 18L4 10.5z" fill="#dcdcdc" stroke="#9a9a9a" stroke-width="1.8"/><path d="M12 20.5L20 28V37H4V28z" fill="#dcdcdc" stroke="#9a9a9a" stroke-width="1.8"/><rect x="4" y="37" width="16" height="12.5" fill="#dcdcdc" stroke="#9a9a9a" stroke-width="1.8"/><rect x="11" y="18.8" width="2.5" height="1.6" fill="#fff"/></svg>
<div class="a" style="left:2816px;top:386px;width:2px;height:18px;background:#f4f4f4;"></div>
<svg class="a" style="left:2807px;top:402px;" width="22" height="22" viewBox="0 0 22 22"><path d="M11 2L19.5 10.5V20H2.5V10.5z" fill="#dcdcdc" stroke="#9a9a9a" stroke-width="1.8"/></svg>
<div class="a" style="left:1381px;top:471px;width:1588px;height:1547px;background:#ffffff;"></div>
<div class="a" style="left:1381px;top:471px;width:1px;height:1547px;background:#c4c4c4;"></div>
<div class="a" style="left:1381px;top:621px;width:1588px;height:1px;background:repeating-linear-gradient(90deg,#8a8a8a 0 1px,transparent 1px 2px)"></div>
<div class="a" style="left:1531px;top:471px;width:1px;height:1547px;background:repeating-linear-gradient(180deg,#8a8a8a 0 1px,transparent 1px 2px)"></div>
<div class="a" style="left:2817px;top:471px;width:1px;height:1547px;background:repeating-linear-gradient(180deg,#8a8a8a 0 1px,transparent 1px 2px)"></div>
<div class="a" style="left:1381px;top:471px;width:1588px;height:1547px;overflow:hidden"><div id="doc" style="left:151.0px;top:152.4px"><div>Lorem<b> </b><u>ipsum</u><b> </b><u>dolor</u><b> </b><u>sit</u><b> </b><u>amet,</u><b> </b><u>consetetur</u><b> </b><u>sadipscing</u><b> </b><u>elitr,</u><b> </b><u>sed</u><b> </b><u>diam</u><b> </b><u>nonumy</u><b> </b><u>eirmod</u><b> </b><u>tempor</u><b> </b><u>invidunt</u><b> </b><u>ut</u><b> </b><u>labore</u><b> </b><u>et</u><b> </b><u>dolore</u><b> </b></div><div><u>magna</u><b> </b><u>aliquyam</u><b> </b><u>erat,</u><b> </b><u>sed</u><b> </b><u>diam</u><b> </b><u>voluptua.</u><b> </b>At<b> </b><u>vero</u><b> </b><u>eos</u><b> </b>et<b> </b>accusam<b> </b>et<b> </b>justo<b> </b><u>duo</u><b> </b><u>dolores</u><b> </b>et<b> </b><u>ea</u><b> </b><u>rebum.</u><b> </b><u>Stet</u><b> </b><u>clita</u><b> </b><u>kasd</u><b> </b><u>gu-</u></div><div><u>bergren,</u><b> </b><u>no</u><b> </b><u>sea</u><b> </b><u>takimata</u><b> </b><u>sanctus</u><b> </b><u>est</u><b> </b><u>Lorem</u><b> </b><u>ipsum</u><b> </b><u>dolor</u><b> </b><u>sit</u><b> </b><u>amet.</u><b> </b><u>Lorem</u><b> </b><u>ipsum</u><b> </b><u>dolor</u><b> </b><u>sit</u><b> </b><u>amet,</u><b> </b><u>consetetur</u><b> </b><u>sadipscing</u><b> </b></div><div><u>elitr,</u><b> </b><u>sed</u><b> </b><u>diam</u><b> </b><u>nonumy</u><b> </b><u>eirmod</u><b> </b><u>tempor</u><b> </b><u>invidunt</u><b> </b><u>ut</u><b> </b><u>labore</u><b> </b><u>et</u><b> </b><u>dolore</u><b> </b><u>magna</u><b> </b><u>aliquyam</u><b> </b><u>erat,</u><b> </b><u>sed</u><b> </b><u>diam</u><b> </b><u>voluptua.</u><b> </b>At<b> </b><u>vero</u><b> </b><u>eos</u><b> </b></div><div>et<b> </b>accusam<b> </b>et<b> </b>justo<b> </b><u>duo</u><b> </b><u>dolores</u><b> </b>et<b> </b><u>ea</u><b> </b><u>rebum.</u><b> </b><u>Stet</u><b> </b><u>clita</u><b> </b><u>kasd</u><b> </b><u>gubergren,</u><b> </b><u>no</u><b> </b><u>sea</u><b> </b><u>takimata</u><b> </b><u>sanctus</u><b> </b><u>est</u><b> </b><u>Lorem</u><b> </b><u>ipsum</u><b> </b><u>dolor</u><b> </b></div><div><u>sit</u><b> </b><u>amet.</u><b> </b><u>Lorem</u><b> </b><u>ipsum</u><b> </b><u>dolor</u><b> </b><u>sit</u><b> </b><u>amet,</u><b> </b><u>consetetur</u><b> </b><u>sadipscing</u><b> </b><u>elitr,</u><b> </b><u>sed</u><b> </b><u>diam</u><b> </b><u>nonumy</u><b> </b><u>eirmod</u><b> </b><u>tempor</u><b> </b><u>invidunt</u><b> </b><u>ut</u><b> </b><u>labore</u><b> </b><u>et</u><b> </b></div><div><u>dolore</u><b> </b><u>magna</u><b> </b><u>aliquyam</u><b> </b><u>erat,</u><b> </b><u>sed</u><b> </b><u>diam</u><b> </b><u>voluptua.</u><b> </b>At<b> </b><u>vero</u><b> </b><u>eos</u><b> </b>et<b> </b>accusam<b> </b>et<b> </b>justo<b> </b><u>duo</u><b> </b><u>dolores</u><b> </b>et<b> </b><u>ea</u><b> </b><u>rebum.</u><b> </b><u>Stet</u><b> </b><u>clita</u><b> </b><u>kasd</u><b> </b></div><div><u>gubergren,</u><b> </b><u>no</u><b> </b><u>sea</u><b> </b><u>takimata</u><b> </b><u>sanctus</u><b> </b><u>est</u><b> </b><u>Lorem</u><b> </b><u>ipsum</u><b> </b><u>dolor</u><b> </b><u>sit</u><b> </b><u>amet.</u><b> </b><b> </b><b> </b>¶</div><div>¶</div><div><s>Duis<b> </b></s><s>autem<b> </b></s><s>vel<b> </b></s><s>eum<b> </b></s><s>iriure<b> </b></s><s>dolor<b> </b></s><s>in<b> </b></s><s>hendrerit<b> </b></s><s>in<b> </b></s><s>vulputate<b> </b></s><s>velit<b> </b></s><s>esse<b> </b></s><s>molestie<b> </b></s><s>consequat,<b> </b></s><s>vel<b> </b></s><s>illum<b> </b></s><s>dolore<b> </b></s><s>eu<b> </b></s><s>feugiat<b> </b></s><s>nulla<b> </b></s></div><div><s>facilisis<b> </b></s><s>at<b> </b></s><s>vero<b> </b></s><s>eros<b> </b></s><s>et<b> </b></s><s>accumsan<b> </b></s><s>et<b> </b></s><s>iusto<b> </b></s><s>odio<b> </b></s><s>dignissim<b> </b></s><s>qui<b> </b></s><s>blandit<b> </b></s><s>praesent<b> </b></s><s>luptatum<b> </b></s><s>zzril<b> </b></s><s>delenit<b> </b></s><s>augue<b> </b></s><s>duis<b> </b></s><s>dolore<b> </b></s><s>te<b> </b></s></div><div><s>feugait<b> </b></s><s>nulla<b> </b></s><s>facilisi.<b> </b></s><s>Lorem<b> </b></s><s>ipsum<b> </b></s><s>dolor<b> </b></s><s>sit<b> </b></s><s>amet,<b> </b></s><s>consectetuer<b> </b></s><s>adipiscing<b> </b></s><s>elit,<b> </b></s><s>sed<b> </b></s><s>diam<b> </b></s><s>nonummy<b> </b></s><s>nibh<b> </b></s><s>euismod<b> </b></s><s>tinci-</s></div><div><s>dunt<b> </b></s><s>ut<b> </b></s><s>laoreet<b> </b></s><s>dolore<b> </b></s><s>magna<b> </b></s><s>aliquam<b> </b></s><s>erat<b> </b></s><s>volutpat.<b> </b><b> </b><b> </b></s>¶</div><div>¶</div><div><s>Ut<b> </b></s><s>wisi<b> </b></s><s>enim<b> </b></s><s>ad<b> </b></s><s>minim<b> </b></s><s>veniam,<b> </b></s><s>quis<b> </b></s><s>nostrud<b> </b></s><s>exerci<b> </b></s><s>tation<b> </b></s><s>ullamcorper<b> </b></s><s>suscipit<b> </b></s><s>lobortis<b> </b></s><s>nisl<b> </b></s><s>ut<b> </b></s><s>aliquip<b> </b></s><s>ex<b> </b></s><s>ea<b> </b></s><s>commodo<b> </b></s></div><div><s>consequat.<b> </b></s><s>Duis<b> </b></s><s>autem<b> </b></s><s>vel<b> </b></s><s>eum<b> </b></s><s>iriure<b> </b></s><s>dolor<b> </b></s><s>in<b> </b></s><s>hendrerit<b> </b></s><s>in<b> </b></s><s>vulputate<b> </b></s><s>velit<b> </b></s><s>esse<b> </b></s><s>molestie<b> </b></s><s>consequat,<b> </b></s><s>vel<b> </b></s><s>illum<b> </b></s><s>dolore<b> </b></s><s>eu<b> </b></s></div><div><s>feugiat<b> </b></s><s>nulla<b> </b></s><s>facilisis<b> </b></s><s>at<b> </b></s><s>vero<b> </b></s><s>eros<b> </b></s><s>et<b> </b></s><s>accumsan<b> </b></s><s>et<b> </b></s><s>iusto<b> </b></s><s>odio<b> </b></s><s>dignissim<b> </b></s><s>qui<b> </b></s><s>blandit<b> </b></s><s>praesent<b> </b></s><s>luptatum<b> </b></s><s>zzril<b> </b></s><s>delenit<b> </b></s><s>augue<b> </b></s></div><div><s>duis<b> </b></s><s>dolore<b> </b></s><s>te<b> </b></s><s>feugait<b> </b></s><s>nulla<b> </b></s><s>facilisi.<b> </b><b> </b><b> </b></s>¶</div><div>¶</div><div><s>Nam<b> </b></s><s>liber<b> </b></s><s>tempor<b> </b></s><s>cum<b> </b></s><s>soluta<b> </b></s><s>nobis<b> </b></s><s>eleifend<b> </b></s><s>option<b> </b></s><s>congue<b> </b></s><s>nihil<b> </b></s><s>imperdiet<b> </b></s><s>doming<b> </b></s><s>id<b> </b></s><s>quod<b> </b></s><s>mazim<b> </b></s><s>placerat<b> </b></s><s>facer<b> </b></s><s>possim<b> </b></s></div><div><s>assum.<b> </b></s><s>Lorem<b> </b></s><s>ipsum<b> </b></s><s>dolor<b> </b></s><s>sit<b> </b></s><s>amet,<b> </b></s><s>consectetuer<b> </b></s><s>adipiscing<b> </b></s><s>elit,<b> </b></s><s>sed<b> </b></s><s>diam<b> </b></s><s>nonummy<b> </b></s><s>nibh<b> </b></s><s>euismod<b> </b></s><s>tincidunt<b> </b></s><s>ut<b> </b></s><s>laoreet<b> </b></s></div><div><s>dolore<b> </b></s><s>magna<b> </b></s><s>aliquam<b> </b></s><s>erat<b> </b></s><s>volutpat.<b> </b></s><s>Ut<b> </b></s><s>wisi<b> </b></s><s>enim<b> </b></s><s>ad<b> </b></s><s>minim<b> </b></s><s>veniam,<b> </b></s><s>quis<b> </b></s><s>nostrud<b> </b></s><s>exerci<b> </b></s><s>tation<b> </b></s><s>ullamcorper<b> </b></s><s>suscipit<b> </b></s><s>lo-</s></div><div><s>bortis<b> </b></s><s>nisl<b> </b></s><s>ut<b> </b></s><s>aliquip<b> </b></s><s>ex<b> </b></s><s>ea<b> </b></s><s>commodo<b> </b></s><s>consequat.<b> </b><b> </b><b> </b></s>¶</div><div>¶</div><div><s>Duis<b> </b></s><s>autem<b> </b></s><s>vel<b> </b></s><s>eum<b> </b></s><s>iriure<b> </b></s><s>dolor<b> </b></s><s>in<b> </b></s><s>hendrerit<b> </b></s><s>in<b> </b></s><s>vulputate<b> </b></s><s>velit<b> </b></s><s>esse<b> </b></s><s>molestie<b> </b></s><s>consequat,<b> </b></s><s>vel<b> </b></s><s>illum<b> </b></s><s>dolore<b> </b></s><s>eu<b> </b></s><s>feugiat<b> </b></s><s>nulla<b> </b></s></div><div><s>facilisis.<b> </b><b> </b><b> </b></s>¶</div><div>¶</div><div>At<b> </b><s>vero</s><b> </b><s>eos</s><b> </b>et<b> </b>accusam<b> </b>et<b> </b>justo¶</div><div>¶</div><div><s>Consetetur<b> </b></s><s>sadipscing<b> </b></s><s>elitr,<b> </b></s><s>sed<b> </b></s><s>diam<b> </b></s><s>nonumy<b> </b></s><s>eirmod<b> </b></s><s>tempor<b> </b></s><s>invidunt<b> </b></s><s>ut<b> </b></s><s>labore<b> </b></s><s>et<b> </b></s><s>dolore<b> </b></s><s>magna<b> </b></s><s>aliquyam<b> </b></s><s>erat,<b> </b></s><s>sed<b> </b></s><s>di-</s></div><div><s>am<b> </b></s><s>voluptua.<b> </b></s>At<b> </b><s>vero</s><b> </b><s>eos</s><b> </b>et<b> </b>accusam<b> </b>et<b> </b>justo<b> </b><s>duo</s><b> </b><s>dolores</s><b> </b>et<b> </b><s>ea</s><b> </b>rebum.<b> </b><s>Stet<b> </b></s><s>clita<b> </b></s><s>kasd<b> </b></s><s>gubergren,<b> </b></s><s>no<b> </b></s><s>sea<b> </b></s><s>takimata<b> </b></s><s>sanctus<b> </b></s></div><div><s>est<b> </b></s><s>Lorem<b> </b></s><s>ipsum<b> </b></s><s>dolor<b> </b></s><s>sit<b> </b></s><s>amet.<b> </b></s><s>Lorem<b> </b></s><s>ipsum<b> </b></s><s>dolor<b> </b></s><s>sit<b> </b></s><s>amet,<b> </b></s><s>consetetur<b> </b></s><s>sadipscing<b> </b></s><s>elitr,<b> </b></s><s>sed<b> </b></s><s>diam<b> </b></s><s>nonumy<b> </b></s><s>eirmod<b> </b></s><s>tem-</s></div><div><s>por<b> </b></s><s>invidunt<b> </b></s><s>ut<b> </b></s><s>labore<b> </b></s><s>et<b> </b></s><s>dolore<b> </b></s><s>magna<b> </b></s><s>aliquyam<b> </b></s><s>erat,<b> </b></s><s>sed<b> </b></s><s>diam<b> </b></s><s>voluptua.<b> </b></s>At<b> </b><s>vero</s><b> </b><s>eos</s><b> </b>et<b> </b>accusam<b> </b>et<b> </b>justo<b> </b><s>duo</s><b> </b><s>dolores</s><b> </b>et<b> </b></div><div><s>ea</s><b> </b>rebum.<b> </b><s>Stet<b> </b></s><s>clita<b> </b></s><s>kasd<b> </b></s><s>gubergren,<b> </b></s><s>no<b> </b></s><s>sea<b> </b></s><s>takimata<b> </b></s><s>sanctus<b> </b></s><s>est<b> </b></s><s>Lorem<b> </b></s><s>ipsum<b> </b></s><s>dolor<b> </b></s><s>sit<b> </b></s><s>amet.<b> </b></s><s>Lorem<b> </b></s><s>ipsum<b> </b></s><s>dolor<b> </b></s><s>sit<b> </b></s></div><div><s>amet,<b> </b></s><s>consetetur<b> </b></s><s>sadipscing<b> </b></s><s>elitr,<b> </b></s><s>sed<b> </b></s><s>diam<b> </b></s><s>nonumy<b> </b></s><s>eirmod<b> </b></s><s>tempor<b> </b></s><s>invidunt<b> </b></s><s>ut<b> </b></s><s>labore<b> </b></s><s>et<b> </b></s><s>dolore<b> </b></s><s>magna<b> </b></s><s>aliquyam<b> </b></s><s>erat,<b> </b></s></div><div><s>sed<b> </b></s><s>diam<b> </b></s><s>voluptua.<b> </b></s>At<b> </b><s>vero</s><b> </b><s>eos</s><b> </b>et<b> </b>accusam<b> </b>et<b> </b>justo<b> </b><s>duo</s><b> </b><s>dolores</s><b> </b>et<b> </b><s>ea</s><b> </b>rebum.<b> </b><s>Stet<b> </b></s><s>clita<b> </b></s><s>kasd<b> </b></s><s>gubergren,<b> </b></s><s>no<b> </b></s><s>sea<b> </b></s><s>takimata<b> </b></s></div><div><s>sanctus.<b> </b><b> </b><b> </b></s>¶</div><div>¶</div><div><s>Lorem<b> </b></s><s>ipsum<b> </b></s><s>dolor<b> </b></s><s>sit<b> </b></s><s>amet,<b> </b></s><s>consetetur<b> </b></s><s>sadipscing<b> </b></s><s>elitr,<b> </b></s><s>sed<b> </b></s><s>diam<b> </b></s><s>nonumy<b> </b></s><s>eirmod<b> </b></s><s>tempor<b> </b></s><s>invidunt<b> </b></s><s>ut<b> </b></s><s>labore<b> </b></s><s>et<b> </b></s><s>dolore<b> </b></s></div><div><s>magna<b> </b></s><s>aliquyam<b> </b></s><s>erat,<b> </b></s><s>sed<b> </b></s><s>diam<b> </b></s><s>voluptua.<b> </b></s>At<b> </b><s>vero</s><b> </b><s>eos</s><b> </b>et<b> </b>accusam<b> </b>et<b> </b>justo<b> </b><s>duo</s><b> </b><s>dolores</s><b> </b>et<b> </b><s>ea</s><b> </b>rebum.<b> </b><s>Stet<b> </b></s><s>clita<b> </b></s><s>kasd<b> </b></s><s>gu-</s></div><div><s>bergren,<b> </b></s><s>no<b> </b></s><s>sea<b> </b></s><s>takimata<b> </b></s><s>sanctus<b> </b></s><s>est<b> </b></s><s>Lorem<b> </b></s><s>ipsum<b> </b></s><s>dolor<b> </b></s><s>sit<b> </b></s><s>amet.<b> </b></s><s>Lorem<b> </b></s><s>ipsum<b> </b></s><s>dolor<b> </b></s><s>sit<b> </b></s><s>amet,<b> </b></s><s>consetetur<b> </b></s><s>sadipscing<b> </b></s></div><div><s>elitr,<b> </b></s><s>sed<b> </b></s><s>diam<b> </b></s><s>nonumy<b> </b></s><s>eirmod<b> </b></s><s>tempor<b> </b></s><s>invidunt<b> </b></s><s>ut<b> </b></s><s>labore<b> </b></s><s>et<b> </b></s><s>dolore<b> </b></s><s>magna<b> </b></s><s>aliquyam<b> </b></s><s>erat,<b> </b></s><s>sed<b> </b></s><s>diam<b> </b></s><s>voluptua.<b> </b></s>At<b> </b><s>vero</s><b> </b><s>eos</s><b> </b></div><div>et<b> </b>accusam<b> </b>et<b> </b>justo<b> </b><s>duo</s><b> </b><s>dolores</s><b> </b>et<b> </b><s>ea</s><b> </b>rebum.<b> </b><s>Stet<b> </b></s><s>clita<b> </b></s><s>kasd<b> </b></s><s>gubergren,<b> </b></s><s>no<b> </b></s><s>sea<b> </b></s><s>takimata<b> </b></s><s>sanctus<b> </b></s><s>est<b> </b></s><s>Lorem<b> </b></s><s>ipsum<b> </b></s><s>dolor<b> </b></s></div><div><s>sit<b> </b></s><s>amet.<b> </b></s><s>Lorem<b> </b></s><s>ipsum<b> </b></s><s>dolor<b> </b></s><s>sit<b> </b></s><s>amet,<b> </b></s><s>consetetur<b> </b></s><s>sadipscing<b> </b></s><s>elitr,<b> </b></s><s>sed<b> </b></s><s>diam<b> </b></s><s>nonumy<b> </b></s><s>eirmod<b> </b></s><s>tempor<b> </b></s><s>invidunt<b> </b></s><s>ut<b> </b></s><s>labore<b> </b></s><s>et<b> </b></s></div><div><s>dolore<b> </b></s><s>magna<b> </b></s><s>aliquyam<b> </b></s><s>erat,<b> </b></s><s>sed<b> </b></s><s>diam<b> </b></s><s>voluptua.<b> </b></s>At<b> </b><s>vero</s><b> </b><s>eos</s><b> </b>et<b> </b>accusam<b> </b>et<b> </b>justo<b> </b><s>duo</s><b> </b><s>dolores</s><b> </b>et<b> </b><s>ea</s><b> </b>rebum.<b> </b><s>Stet<b> </b></s><s>clita<b> </b></s><s>kasd<b> </b></s></div><div><s>gubergren,<b> </b></s><s>no<b> </b></s><s>sea<b> </b></s><s>takimata<b> </b></s><s>sanctus<b> </b></s><s>est<b> </b></s><s>Lorem<b> </b></s><s>ipsum<b> </b></s><s>dolor<b> </b></s><s>sit<b> </b></s><s>amet.<b> </b><b> </b><b> </b></s>¶</div></div><svg class="a" style="left:0;top:0" width="1588" height="1547"><defs><pattern id="r0" patternUnits="userSpaceOnUse" x="0" y="177.26" width="8" height="14"><polyline points="-4,4.9 0,0.7 4,4.9 8,0.7 12,4.9" fill="none" stroke="#ff2a14" stroke-width="1.5"/></pattern><pattern id="r1" patternUnits="userSpaceOnUse" x="0" y="207.79" width="8" height="14"><polyline points="-4,4.9 0,0.7 4,4.9 8,0.7 12,4.9" fill="none" stroke="#ff2a14" stroke-width="1.5"/></pattern><pattern id="r2" patternUnits="userSpaceOnUse" x="0" y="238.32" width="8" height="14"><polyline points="-4,4.9 0,0.7 4,4.9 8,0.7 12,4.9" fill="none" stroke="#ff2a14" stroke-width="1.5"/></pattern><pattern id="r3" patternUnits="userSpaceOnUse" x="0" y="268.85" width="8" height="14"><polyline points="-4,4.9 0,0.7 4,4.9 8,0.7 12,4.9" fill="none" stroke="#ff2a14" stroke-width="1.5"/></pattern><pattern id="r4" patternUnits="userSpaceOnUse" x="0" y="299.38" width="8" height="14"><polyline points="-4,4.9 0,0.7 4,4.9 8,0.7 12,4.9" fill="none" stroke="#ff2a14" stroke-width="1.5"/></pattern><pattern id="r5" patternUnits="userSpaceOnUse" x="0" y="329.91" width="8" height="14"><polyline points="-4,4.9 0,0.7 4,4.9 8,0.7 12,4.9" fill="none" stroke="#ff2a14" stroke-width="1.5"/></pattern><pattern id="r6" patternUnits="userSpaceOnUse" x="0" y="360.44" width="8" height="14"><polyline points="-4,4.9 0,0.7 4,4.9 8,0.7 12,4.9" fill="none" stroke="#ff2a14" stroke-width="1.5"/></pattern><pattern id="r7" patternUnits="userSpaceOnUse" x="0" y="390.97" width="8" height="14"><polyline points="-4,4.9 0,0.7 4,4.9 8,0.7 12,4.9" fill="none" stroke="#ff2a14" stroke-width="1.5"/></pattern><pattern id="g9" patternUnits="userSpaceOnUse" x="0" y="452.03" width="8" height="14"><polyline points="-4,4.9 0,0.7 4,4.9 8,0.7 12,4.9" fill="none" stroke="#46e81c" stroke-width="1.5"/></pattern><pattern id="g10" patternUnits="userSpaceOnUse" x="0" y="482.56" width="8" height="14"><polyline points="-4,4.9 0,0.7 4,4.9 8,0.7 12,4.9" fill="none" stroke="#46e81c" stroke-width="1.5"/></pattern><pattern id="g11" patternUnits="userSpaceOnUse" x="0" y="513.09" width="8" height="14"><polyline points="-4,4.9 0,0.7 4,4.9 8,0.7 12,4.9" fill="none" stroke="#46e81c" stroke-width="1.5"/></pattern><pattern id="g12" patternUnits="userSpaceOnUse" x="0" y="543.62" width="8" height="14"><polyline points="-4,4.9 0,0.7 4,4.9 8,0.7 12,4.9" fill="none" stroke="#46e81c" stroke-width="1.5"/></pattern><pattern id="g14" patternUnits="userSpaceOnUse" x="0" y="604.68" width="8" height="14"><polyline points="-4,4.9 0,0.7 4,4.9 8,0.7 12,4.9" fill="none" stroke="#46e81c" stroke-width="1.5"/></pattern><pattern id="g15" patternUnits="userSpaceOnUse" x="0" y="635.21" width="8" height="14"><polyline points="-4,4.9 0,0.7 4,4.9 8,0.7 12,4.9" fill="none" stroke="#46e81c" stroke-width="1.5"/></pattern><pattern id="g16" patternUnits="userSpaceOnUse" x="0" y="665.74" width="8" height="14"><polyline points="-4,4.9 0,0.7 4,4.9 8,0.7 12,4.9" fill="none" stroke="#46e81c" stroke-width="1.5"/></pattern><pattern id="g17" patternUnits="userSpaceOnUse" x="0" y="696.27" width="8" height="14"><polyline points="-4,4.9 0,0.7 4,4.9 8,0.7 12,4.9" fill="none" stroke="#46e81c" stroke-width="1.5"/></pattern><pattern id="g19" patternUnits="userSpaceOnUse" x="0" y="757.33" width="8" height="14"><polyline points="-4,4.9 0,0.7 4,4.9 8,0.7 12,4.9" fill="none" stroke="#46e81c" stroke-width="1.5"/></pattern><pattern id="g20" patternUnits="userSpaceOnUse" x="0" y="787.86" width="8" height="14"><polyline points="-4,4.9 0,0.7 4,4.9 8,0.7 12,4.9" fill="none" stroke="#46e81c" stroke-width="1.5"/></pattern><pattern id="g21" patternUnits="userSpaceOnUse" x="0" y="818.39" width="8" height="14"><polyline points="-4,4.9 0,0.7 4,4.9 8,0.7 12,4.9" fill="none" stroke="#46e81c" stroke-width="1.5"/></pattern><pattern id="g22" patternUnits="userSpaceOnUse" x="0" y="848.92" width="8" height="14"><polyline points="-4,4.9 0,0.7 4,4.9 8,0.7 12,4.9" fill="none" stroke="#46e81c" stroke-width="1.5"/></pattern><pattern id="g24" patternUnits="userSpaceOnUse" x="0" y="909.98" width="8" height="14"><polyline points="-4,4.9 0,0.7 4,4.9 8,0.7 12,4.9" fill="none" stroke="#46e81c" stroke-width="1.5"/></pattern><pattern id="g25" patternUnits="userSpaceOnUse" x="0" y="940.51" width="8" height="14"><polyline points="-4,4.9 0,0.7 4,4.9 8,0.7 12,4.9" fill="none" stroke="#46e81c" stroke-width="1.5"/></pattern><pattern id="g27" patternUnits="userSpaceOnUse" x="0" y="1001.57" width="8" height="14"><polyline points="-4,4.9 0,0.7 4,4.9 8,0.7 12,4.9" fill="none" stroke="#46e81c" stroke-width="1.5"/></pattern><pattern id="g29" patternUnits="userSpaceOnUse" x="0" y="1062.63" width="8" height="14"><polyline points="-4,4.9 0,0.7 4,4.9 8,0.7 12,4.9" fill="none" stroke="#46e81c" stroke-width="1.5"/></pattern><pattern id="g30" patternUnits="userSpaceOnUse" x="0" y="1093.16" width="8" height="14"><polyline points="-4,4.9 0,0.7 4,4.9 8,0.7 12,4.9" fill="none" stroke="#46e81c" stroke-width="1.5"/></pattern><pattern id="g31" patternUnits="userSpaceOnUse" x="0" y="1123.69" width="8" height="14"><polyline points="-4,4.9 0,0.7 4,4.9 8,0.7 12,4.9" fill="none" stroke="#46e81c" stroke-width="1.5"/></pattern><pattern id="g32" patternUnits="userSpaceOnUse" x="0" y="1154.22" width="8" height="14"><polyline points="-4,4.9 0,0.7 4,4.9 8,0.7 12,4.9" fill="none" stroke="#46e81c" stroke-width="1.5"/></pattern><pattern id="g33" patternUnits="userSpaceOnUse" x="0" y="1184.75" width="8" height="14"><polyline points="-4,4.9 0,0.7 4,4.9 8,0.7 12,4.9" fill="none" stroke="#46e81c" stroke-width="1.5"/></pattern><pattern id="g34" patternUnits="userSpaceOnUse" x="0" y="1215.28" width="8" height="14"><polyline points="-4,4.9 0,0.7 4,4.9 8,0.7 12,4.9" fill="none" stroke="#46e81c" stroke-width="1.5"/></pattern><pattern id="g35" patternUnits="userSpaceOnUse" x="0" y="1245.81" width="8" height="14"><polyline points="-4,4.9 0,0.7 4,4.9 8,0.7 12,4.9" fill="none" stroke="#46e81c" stroke-width="1.5"/></pattern><pattern id="g36" patternUnits="userSpaceOnUse" x="0" y="1276.34" width="8" height="14"><polyline points="-4,4.9 0,0.7 4,4.9 8,0.7 12,4.9" fill="none" stroke="#46e81c" stroke-width="1.5"/></pattern><pattern id="g38" patternUnits="userSpaceOnUse" x="0" y="1337.40" width="8" height="14"><polyline points="-4,4.9 0,0.7 4,4.9 8,0.7 12,4.9" fill="none" stroke="#46e81c" stroke-width="1.5"/></pattern><pattern id="g39" patternUnits="userSpaceOnUse" x="0" y="1367.93" width="8" height="14"><polyline points="-4,4.9 0,0.7 4,4.9 8,0.7 12,4.9" fill="none" stroke="#46e81c" stroke-width="1.5"/></pattern><pattern id="g40" patternUnits="userSpaceOnUse" x="0" y="1398.46" width="8" height="14"><polyline points="-4,4.9 0,0.7 4,4.9 8,0.7 12,4.9" fill="none" stroke="#46e81c" stroke-width="1.5"/></pattern><pattern id="g41" patternUnits="userSpaceOnUse" x="0" y="1428.99" width="8" height="14"><polyline points="-4,4.9 0,0.7 4,4.9 8,0.7 12,4.9" fill="none" stroke="#46e81c" stroke-width="1.5"/></pattern><pattern id="g42" patternUnits="userSpaceOnUse" x="0" y="1459.52" width="8" height="14"><polyline points="-4,4.9 0,0.7 4,4.9 8,0.7 12,4.9" fill="none" stroke="#46e81c" stroke-width="1.5"/></pattern><pattern id="g43" patternUnits="userSpaceOnUse" x="0" y="1490.05" width="8" height="14"><polyline points="-4,4.9 0,0.7 4,4.9 8,0.7 12,4.9" fill="none" stroke="#46e81c" stroke-width="1.5"/></pattern><pattern id="g44" patternUnits="userSpaceOnUse" x="0" y="1520.58" width="8" height="14"><polyline points="-4,4.9 0,0.7 4,4.9 8,0.7 12,4.9" fill="none" stroke="#46e81c" stroke-width="1.5"/></pattern><pattern id="g45" patternUnits="userSpaceOnUse" x="0" y="1551.11" width="8" height="14"><polyline points="-4,4.9 0,0.7 4,4.9 8,0.7 12,4.9" fill="none" stroke="#46e81c" stroke-width="1.5"/></pattern></defs><rect x="228.9" y="177.26" width="65.3" height="7" fill="url(#r0)"/><rect x="300.9" y="177.26" width="56.4" height="7" fill="url(#r0)"/><rect x="364.1" y="177.26" width="25.3" height="7" fill="url(#r0)"/><rect x="396.0" y="177.26" width="58.6" height="7" fill="url(#r0)"/><rect x="461.4" y="177.26" width="109.8" height="7" fill="url(#r0)"/><rect x="577.9" y="177.26" width="112.8" height="7" fill="url(#r0)"/><rect x="697.5" y="177.26" width="48.7" height="7" fill="url(#r0)"/><rect x="752.9" y="177.26" width="35.6" height="7" fill="url(#r0)"/><rect x="795.2" y="177.26" width="53.4" height="7" fill="url(#r0)"/><rect x="855.3" y="177.26" width="87.6" height="7" fill="url(#r0)"/><rect x="949.6" y="177.26" width="75.7" height="7" fill="url(#r0)"/><rect x="1032.0" y="177.26" width="75.7" height="7" fill="url(#r0)"/><rect x="1114.4" y="177.26" width="89.1" height="7" fill="url(#r0)"/><rect x="1210.2" y="177.26" width="20.8" height="7" fill="url(#r0)"/><rect x="1237.7" y="177.26" width="66.8" height="7" fill="url(#r0)"/><rect x="1311.2" y="177.26" width="19.3" height="7" fill="url(#r0)"/><rect x="1337.2" y="177.26" width="68.3" height="7" fill="url(#r0)"/><rect x="151.0" y="207.79" width="71.2" height="7" fill="url(#r1)"/><rect x="228.9" y="207.79" width="99.4" height="7" fill="url(#r1)"/><rect x="335.0" y="207.79" width="46.8" height="7" fill="url(#r1)"/><rect x="388.5" y="207.79" width="35.6" height="7" fill="url(#r1)"/><rect x="430.8" y="207.79" width="53.4" height="7" fill="url(#r1)"/><rect x="491.0" y="207.79" width="100.2" height="7" fill="url(#r1)"/><rect x="629.8" y="207.79" width="47.5" height="7" fill="url(#r1)"/><rect x="684.0" y="207.79" width="35.6" height="7" fill="url(#r1)"/><rect x="935.8" y="207.79" width="40.1" height="7" fill="url(#r1)"/><rect x="982.6" y="207.79" width="78.7" height="7" fill="url(#r1)"/><rect x="1094.0" y="207.79" width="23.7" height="7" fill="url(#r1)"/><rect x="1124.4" y="207.79" width="75.0" height="7" fill="url(#r1)"/><rect x="1206.1" y="207.79" width="41.6" height="7" fill="url(#r1)"/><rect x="1254.4" y="207.79" width="46.0" height="7" fill="url(#r1)"/><rect x="1307.1" y="207.79" width="49.0" height="7" fill="url(#r1)"/><rect x="1362.8" y="207.79" width="35.6" height="7" fill="url(#r1)"/><rect x="151.0" y="238.32" width="87.8" height="7" fill="url(#r2)"/><rect x="245.5" y="238.32" width="26.7" height="7" fill="url(#r2)"/><rect x="279.0" y="238.32" width="34.1" height="7" fill="url(#r2)"/><rect x="319.8" y="238.32" width="92.0" height="7" fill="url(#r2)"/><rect x="418.5" y="238.32" width="78.7" height="7" fill="url(#r2)"/><rect x="503.9" y="238.32" width="29.7" height="7" fill="url(#r2)"/><rect x="540.3" y="238.32" width="71.2" height="7" fill="url(#r2)"/><rect x="618.2" y="238.32" width="65.3" height="7" fill="url(#r2)"/><rect x="690.2" y="238.32" width="56.4" height="7" fill="url(#r2)"/><rect x="753.4" y="238.32" width="25.3" height="7" fill="url(#r2)"/><rect x="785.4" y="238.32" width="58.6" height="7" fill="url(#r2)"/><rect x="850.7" y="238.32" width="71.2" height="7" fill="url(#r2)"/><rect x="928.6" y="238.32" width="65.3" height="7" fill="url(#r2)"/><rect x="1000.6" y="238.32" width="56.4" height="7" fill="url(#r2)"/><rect x="1063.8" y="238.32" width="25.3" height="7" fill="url(#r2)"/><rect x="1095.7" y="238.32" width="58.6" height="7" fill="url(#r2)"/><rect x="1161.1" y="238.32" width="109.8" height="7" fill="url(#r2)"/><rect x="1277.6" y="238.32" width="112.8" height="7" fill="url(#r2)"/><rect x="151.0" y="268.85" width="48.7" height="7" fill="url(#r3)"/><rect x="206.4" y="268.85" width="35.6" height="7" fill="url(#r3)"/><rect x="248.7" y="268.85" width="53.4" height="7" fill="url(#r3)"/><rect x="308.9" y="268.85" width="87.6" height="7" fill="url(#r3)"/><rect x="403.1" y="268.85" width="75.7" height="7" fill="url(#r3)"/><rect x="485.5" y="268.85" width="75.7" height="7" fill="url(#r3)"/><rect x="567.9" y="268.85" width="89.1" height="7" fill="url(#r3)"/><rect x="663.7" y="268.85" width="20.8" height="7" fill="url(#r3)"/><rect x="691.2" y="268.85" width="66.8" height="7" fill="url(#r3)"/><rect x="764.7" y="268.85" width="19.3" height="7" fill="url(#r3)"/><rect x="790.7" y="268.85" width="68.3" height="7" fill="url(#r3)"/><rect x="865.7" y="268.85" width="71.2" height="7" fill="url(#r3)"/><rect x="943.6" y="268.85" width="99.4" height="7" fill="url(#r3)"/><rect x="1049.8" y="268.85" width="46.8" height="7" fill="url(#r3)"/><rect x="1103.2" y="268.85" width="35.6" height="7" fill="url(#r3)"/><rect x="1145.6" y="268.85" width="53.4" height="7" fill="url(#r3)"/><rect x="1205.7" y="268.85" width="100.2" height="7" fill="url(#r3)"/><rect x="1344.6" y="268.85" width="47.5" height="7" fill="url(#r3)"/><rect x="1398.8" y="268.85" width="35.6" height="7" fill="url(#r3)"/><rect x="360.4" y="299.38" width="40.1" height="7" fill="url(#r4)"/><rect x="407.2" y="299.38" width="78.7" height="7" fill="url(#r4)"/><rect x="518.6" y="299.38" width="23.7" height="7" fill="url(#r4)"/><rect x="549.0" y="299.38" width="75.0" height="7" fill="url(#r4)"/><rect x="630.7" y="299.38" width="41.6" height="7" fill="url(#r4)"/><rect x="679.0" y="299.38" width="46.0" height="7" fill="url(#r4)"/><rect x="731.7" y="299.38" width="49.0" height="7" fill="url(#r4)"/><rect x="787.4" y="299.38" width="114.5" height="7" fill="url(#r4)"/><rect x="908.7" y="299.38" width="26.7" height="7" fill="url(#r4)"/><rect x="942.1" y="299.38" width="34.1" height="7" fill="url(#r4)"/><rect x="982.9" y="299.38" width="92.0" height="7" fill="url(#r4)"/><rect x="1081.7" y="299.38" width="78.7" height="7" fill="url(#r4)"/><rect x="1167.0" y="299.38" width="29.7" height="7" fill="url(#r4)"/><rect x="1203.5" y="299.38" width="71.2" height="7" fill="url(#r4)"/><rect x="1281.4" y="299.38" width="65.3" height="7" fill="url(#r4)"/><rect x="1353.4" y="299.38" width="56.4" height="7" fill="url(#r4)"/><rect x="151.0" y="329.91" width="25.3" height="7" fill="url(#r5)"/><rect x="183.0" y="329.91" width="58.6" height="7" fill="url(#r5)"/><rect x="248.3" y="329.91" width="71.2" height="7" fill="url(#r5)"/><rect x="326.2" y="329.91" width="65.3" height="7" fill="url(#r5)"/><rect x="398.2" y="329.91" width="56.4" height="7" fill="url(#r5)"/><rect x="461.4" y="329.91" width="25.3" height="7" fill="url(#r5)"/><rect x="493.4" y="329.91" width="58.6" height="7" fill="url(#r5)"/><rect x="558.7" y="329.91" width="109.8" height="7" fill="url(#r5)"/><rect x="675.2" y="329.91" width="112.8" height="7" fill="url(#r5)"/><rect x="794.8" y="329.91" width="48.7" height="7" fill="url(#r5)"/><rect x="850.2" y="329.91" width="35.6" height="7" fill="url(#r5)"/><rect x="892.5" y="329.91" width="53.4" height="7" fill="url(#r5)"/><rect x="952.6" y="329.91" width="87.6" height="7" fill="url(#r5)"/><rect x="1046.9" y="329.91" width="75.7" height="7" fill="url(#r5)"/><rect x="1129.3" y="329.91" width="75.7" height="7" fill="url(#r5)"/><rect x="1211.7" y="329.91" width="89.1" height="7" fill="url(#r5)"/><rect x="1307.5" y="329.91" width="20.8" height="7" fill="url(#r5)"/><rect x="1335.0" y="329.91" width="66.8" height="7" fill="url(#r5)"/><rect x="1408.5" y="329.91" width="19.3" height="7" fill="url(#r5)"/><rect x="151.0" y="360.44" width="68.3" height="7" fill="url(#r6)"/><rect x="226.0" y="360.44" width="71.2" height="7" fill="url(#r6)"/><rect x="303.9" y="360.44" width="99.4" height="7" fill="url(#r6)"/><rect x="410.0" y="360.44" width="46.8" height="7" fill="url(#r6)"/><rect x="463.5" y="360.44" width="35.6" height="7" fill="url(#r6)"/><rect x="505.8" y="360.44" width="53.4" height="7" fill="url(#r6)"/><rect x="566.0" y="360.44" width="100.2" height="7" fill="url(#r6)"/><rect x="704.8" y="360.44" width="47.5" height="7" fill="url(#r6)"/><rect x="759.0" y="360.44" width="35.6" height="7" fill="url(#r6)"/><rect x="1010.8" y="360.44" width="40.1" height="7" fill="url(#r6)"/><rect x="1057.5" y="360.44" width="78.7" height="7" fill="url(#r6)"/><rect x="1169.0" y="360.44" width="23.7" height="7" fill="url(#r6)"/><rect x="1199.4" y="360.44" width="75.0" height="7" fill="url(#r6)"/><rect x="1281.0" y="360.44" width="41.6" height="7" fill="url(#r6)"/><rect x="1329.3" y="360.44" width="46.0" height="7" fill="url(#r6)"/><rect x="1382.1" y="360.44" width="49.0" height="7" fill="url(#r6)"/><rect x="151.0" y="390.97" width="114.5" height="7" fill="url(#r7)"/><rect x="272.2" y="390.97" width="26.7" height="7" fill="url(#r7)"/><rect x="305.7" y="390.97" width="34.1" height="7" fill="url(#r7)"/><rect x="346.5" y="390.97" width="92.0" height="7" fill="url(#r7)"/><rect x="445.2" y="390.97" width="78.7" height="7" fill="url(#r7)"/><rect x="530.6" y="390.97" width="29.7" height="7" fill="url(#r7)"/><rect x="567.0" y="390.97" width="71.2" height="7" fill="url(#r7)"/><rect x="644.9" y="390.97" width="65.3" height="7" fill="url(#r7)"/><rect x="717.0" y="390.97" width="56.4" height="7" fill="url(#r7)"/><rect x="780.1" y="390.97" width="25.3" height="7" fill="url(#r7)"/><rect x="812.1" y="390.97" width="58.6" height="7" fill="url(#r7)"/><rect x="151.0" y="452.03" width="1286.8" height="7" fill="url(#g9)"/><rect x="151.0" y="482.56" width="1284.7" height="7" fill="url(#g10)"/><rect x="151.0" y="513.09" width="1267.5" height="7" fill="url(#g11)"/><rect x="151.0" y="543.62" width="568.0" height="7" fill="url(#g12)"/><rect x="151.0" y="604.68" width="1265.3" height="7" fill="url(#g14)"/><rect x="151.0" y="635.21" width="1266.0" height="7" fill="url(#g15)"/><rect x="151.0" y="665.74" width="1273.5" height="7" fill="url(#g16)"/><rect x="151.0" y="696.27" width="392.9" height="7" fill="url(#g17)"/><rect x="151.0" y="757.33" width="1290.3" height="7" fill="url(#g19)"/><rect x="151.0" y="787.86" width="1272.7" height="7" fill="url(#g20)"/><rect x="151.0" y="818.39" width="1270.4" height="7" fill="url(#g21)"/><rect x="151.0" y="848.92" width="531.0" height="7" fill="url(#g22)"/><rect x="151.0" y="909.98" width="1286.8" height="7" fill="url(#g24)"/><rect x="151.0" y="940.51" width="110.0" height="7" fill="url(#g25)"/><rect x="184.4" y="1001.57" width="47.5" height="7" fill="url(#g27)"/><rect x="238.6" y="1001.57" width="35.6" height="7" fill="url(#g27)"/><rect x="151.0" y="1062.63" width="1266.3" height="7" fill="url(#g29)"/><rect x="151.0" y="1093.16" width="144.8" height="7" fill="url(#g30)"/><rect x="329.2" y="1093.16" width="47.5" height="7" fill="url(#g30)"/><rect x="383.4" y="1093.16" width="35.6" height="7" fill="url(#g30)"/><rect x="635.2" y="1093.16" width="40.1" height="7" fill="url(#g30)"/><rect x="681.9" y="1093.16" width="78.7" height="7" fill="url(#g30)"/><rect x="793.3" y="1093.16" width="23.7" height="7" fill="url(#g30)"/><rect x="905.4" y="1093.16" width="536.3" height="7" fill="url(#g30)"/><rect x="151.0" y="1123.69" width="1276.7" height="7" fill="url(#g31)"/><rect x="151.0" y="1154.22" width="785.6" height="7" fill="url(#g32)"/><rect x="970.0" y="1154.22" width="47.5" height="7" fill="url(#g32)"/><rect x="1024.2" y="1154.22" width="35.6" height="7" fill="url(#g32)"/><rect x="1275.9" y="1154.22" width="40.1" height="7" fill="url(#g32)"/><rect x="1322.7" y="1154.22" width="78.7" height="7" fill="url(#g32)"/><rect x="151.0" y="1184.75" width="23.7" height="7" fill="url(#g33)"/><rect x="263.1" y="1184.75" width="1128.2" height="7" fill="url(#g33)"/><rect x="151.0" y="1215.28" width="1253.7" height="7" fill="url(#g34)"/><rect x="151.0" y="1245.81" width="207.9" height="7" fill="url(#g35)"/><rect x="392.3" y="1245.81" width="47.5" height="7" fill="url(#g35)"/><rect x="446.5" y="1245.81" width="35.6" height="7" fill="url(#g35)"/><rect x="698.3" y="1245.81" width="40.1" height="7" fill="url(#g35)"/><rect x="745.0" y="1245.81" width="78.7" height="7" fill="url(#g35)"/><rect x="856.5" y="1245.81" width="23.7" height="7" fill="url(#g35)"/><rect x="968.5" y="1245.81" width="451.0" height="7" fill="url(#g35)"/><rect x="151.0" y="1276.34" width="105.5" height="7" fill="url(#g36)"/><rect x="151.0" y="1337.40" width="1261.2" height="7" fill="url(#g38)"/><rect x="151.0" y="1367.93" width="445.4" height="7" fill="url(#g39)"/><rect x="629.8" y="1367.93" width="47.5" height="7" fill="url(#g39)"/><rect x="684.0" y="1367.93" width="35.6" height="7" fill="url(#g39)"/><rect x="935.8" y="1367.93" width="40.1" height="7" fill="url(#g39)"/><rect x="982.6" y="1367.93" width="78.7" height="7" fill="url(#g39)"/><rect x="1094.0" y="1367.93" width="23.7" height="7" fill="url(#g39)"/><rect x="1206.1" y="1367.93" width="192.3" height="7" fill="url(#g39)"/><rect x="151.0" y="1398.46" width="1246.2" height="7" fill="url(#g40)"/><rect x="151.0" y="1428.99" width="1160.1" height="7" fill="url(#g41)"/><rect x="1344.6" y="1428.99" width="47.5" height="7" fill="url(#g41)"/><rect x="1398.8" y="1428.99" width="35.6" height="7" fill="url(#g41)"/><rect x="360.4" y="1459.52" width="40.1" height="7" fill="url(#g42)"/><rect x="407.2" y="1459.52" width="78.7" height="7" fill="url(#g42)"/><rect x="518.6" y="1459.52" width="23.7" height="7" fill="url(#g42)"/><rect x="630.7" y="1459.52" width="785.8" height="7" fill="url(#g42)"/><rect x="151.0" y="1490.05" width="1283.5" height="7" fill="url(#g43)"/><rect x="151.0" y="1520.58" width="520.4" height="7" fill="url(#g44)"/><rect x="704.8" y="1520.58" width="47.5" height="7" fill="url(#g44)"/><rect x="759.0" y="1520.58" width="35.6" height="7" fill="url(#g44)"/><rect x="1010.8" y="1520.58" width="40.1" height="7" fill="url(#g44)"/><rect x="1057.5" y="1520.58" width="78.7" height="7" fill="url(#g44)"/><rect x="1169.0" y="1520.58" width="23.7" height="7" fill="url(#g44)"/><rect x="1281.0" y="1520.58" width="156.7" height="7" fill="url(#g44)"/><rect x="151.0" y="1551.11" width="739.8" height="7" fill="url(#g45)"/></svg></div>
<div class="a" style="left:1531px;top:622px;width:2px;height:31px;background:#000;"></div>
<svg class="a" style="left:1255px;top:1440px;" width="270" height="42" viewBox="0 0 270 42"><path d="M6 19h236v5H6z" fill="#e8412a"/><path d="M240 9L264 21.5L240 34z" fill="#e8412a"/></svg>
<div class="a" style="left:3788px;top:372px;width:32px;height:1646px;background:#5b5b5b;"></div>
<svg class="a" style="left:3797px;top:381px;" width="16" height="14" viewBox="0 0 16 14"><path d="M0 12L8 3L16 12V14L8 7L0 14z" fill="#d8d8d8"/><path d="M1 11L8 3L15 11" fill="none" stroke="#d8d8d8" stroke-width="3"/></svg>
<div class="a" style="left:3788px;top:404px;width:32px;height:170px;background:#a3a3a3;"></div>
<svg class="a" style="left:3797px;top:1897px;" width="16" height="14" viewBox="0 0 16 14"><path d="M1 3L8 11L15 3" fill="none" stroke="#d8d8d8" stroke-width="3"/></svg>
<div class="a" style="left:3788px;top:1920px;width:32px;height:98px;background:#555;border:2px solid #222"></div>
<div class="a" style="left:3788px;top:1950px;width:32px;height:2px;background:#222;"></div>
<div class="a" style="left:3788px;top:1984px;width:32px;height:2px;background:#222;"></div>
<svg class="a" style="left:3796px;top:1926px;" width="16" height="20" viewBox="0 0 16 20"><path d="M2 8L8 2L14 8z M2 15L8 9L14 15z" fill="#f4f4f4"/></svg>
<div class="a" style="left:3798px;top:1962px;width:9px;height:9px;border-radius:50%;background:#e8213a;border:1px solid #b0506a"></div>
<svg class="a" style="left:3796px;top:1992px;" width="16" height="20" viewBox="0 0 16 20"><path d="M2 3L8 9L14 3z M2 10L8 16L14 10z" fill="#f4f4f4"/><rect x="2" y="17" width="12" height="2" fill="#f4f4f4"/></svg>
<svg class="a" style="left:3796px;top:1926px;" width="16" height="20" viewBox="0 0 16 20"><rect x="2" y="1" width="12" height="2" fill="#f4f4f4"/></svg>
<div class="a" style="left:3822px;top:1170px;width:16px;height:81px;background:#4b4c4a;border:2px solid #3e3e3e;border-radius:3px"></div>
<div class="a" style="left:3826.5px;top:1205.0px;width:0;height:0;border-top:6.0px solid transparent;border-bottom:6.0px solid transparent;border-right:7.0px solid #fafafa"></div>
<div class="a" style="left:500px;top:2018px;width:3288px;height:32px;background:#5b5b5b;"></div>
<div class="a" style="left:500px;top:2018px;width:32px;height:32px;background:#a0a0a0;"></div>
<svg class="a" style="left:508px;top:2026px;" width="16" height="16" viewBox="0 0 16 16"><path d="M12 1L4 8L12 15" fill="none" stroke="#cfcfcf" stroke-width="3"/></svg>
<div class="a" style="left:3788px;top:2018px;width:32px;height:32px;background:#4b4d4b;"></div>
<div class="a" style="left:3756px;top:2018px;width:32px;height:32px;background:#a0a0a0;"></div>
<svg class="a" style="left:3764px;top:2026px;" width="16" height="16" viewBox="0 0 16 16"><path d="M4 1L12 8L4 15" fill="none" stroke="#cfcfcf" stroke-width="3"/></svg>
<div class="a" style="left:0px;top:2050px;width:3834px;height:50px;background:#5b5b5b;"></div>
<div class="a" style="left:0px;top:2050px;width:3834px;height:1px;background:#636363;"></div>
<div class="a" style="left:1389px;top:2060px;width:2px;height:40px;background:#7c7c7c;"></div>
<div class="a" style="left:1620px;top:2060px;width:2px;height:40px;background:#7c7c7c;"></div>
<div class="a" style="left:1808px;top:2060px;width:2px;height:40px;background:#7c7c7c;"></div>
<div class="a" style="left:1996px;top:2060px;width:2px;height:40px;background:#7c7c7c;"></div>
<div class="a" style="left:2260px;top:2060px;width:2px;height:40px;background:#7c7c7c;"></div>
<div class="a" style="left:2594px;top:2060px;width:2px;height:40px;background:#7c7c7c;"></div>
<div class="a" style="left:2905px;top:2060px;width:2px;height:40px;background:#7c7c7c;"></div>
<div class="a" style="left:3057px;top:2060px;width:2px;height:40px;background:#7c7c7c;"></div>
<div class="t" style="top:2063.49px;font-size:26px;color:#e2e2e2;letter-spacing:0.8px;left:1401.00px;">Ze 1 Sp 1</div>
<div class="t" style="top:2063.49px;font-size:26px;color:#e2e2e2;letter-spacing:0.8px;left:1632.00px;">Bereich 1</div>
<div class="t" style="top:2063.49px;font-size:26px;color:#e2e2e2;letter-spacing:0.8px;left:1820.00px;">Kapitel 1</div>
<div class="t" style="top:2063.49px;font-size:26px;color:#e2e2e2;letter-spacing:0.8px;left:2008.00px;">Seite 1 von 6</div>
<div class="t" style="top:2063.49px;font-size:26px;color:#e2e2e2;letter-spacing:0.8px;left:2273.00px;">Deutsch (Deutschland)</div>
<div class="t" style="top:2063.49px;font-size:26px;color:#e2e2e2;letter-spacing:0.8px;left:2608.00px;">4771 Wörter</div>
<div class="t" style="top:2063.49px;font-size:26px;color:#e2e2e2;letter-spacing:0.8px;left:3090.00px;">EINF</div>
<div class="a" style="left:3176px;top:2055px;width:48px;height:50px;background:#6a6a6a;border:2px solid #a0a0a0;border-radius:4px"></div>
<svg class="a" style="left:3185px;top:2063px;" width="30" height="34" viewBox="0 0 30 34"><rect x="1" y="1" width="27" height="30" fill="#fff"/><rect x="5" y="5" width="19" height="1.5" fill="#666"/><rect x="5" y="9" width="19" height="1.5" fill="#666"/><rect x="5" y="13" width="19" height="1.5" fill="#666"/><rect x="5" y="17" width="19" height="1.5" fill="#666"/><rect x="5" y="21" width="19" height="1.5" fill="#666"/><rect x="5" y="25" width="19" height="1.5" fill="#666"/></svg>
<svg class="a" style="left:3236px;top:2065px;" width="28" height="30" viewBox="0 0 28 30"><rect x="2" y="2" width="24" height="1.5" fill="#e8e8e8"/><rect x="2" y="5" width="24" height="1.5" fill="#e8e8e8"/><rect x="2" y="9" width="24" height="1.5" fill="#e8e8e8"/><rect x="2" y="12" width="24" height="1.5" fill="#e8e8e8"/><rect x="2" y="16" width="24" height="1.5" fill="#e8e8e8"/><rect x="2" y="20" width="24" height="1.5" fill="#e8e8e8"/><rect x="2" y="23" width="24" height="1.5" fill="#e8e8e8"/></svg>
<svg class="a" style="left:3284px;top:2062px;" width="32" height="34" viewBox="0 0 32 34"><rect x="1" y="1" width="28" height="29" fill="#fff" stroke="#999"/><rect x="4" y="27" width="22" height="1.5" fill="#666"/></svg>
<svg class="a" style="left:3336px;top:2065px;" width="28" height="30" viewBox="0 0 28 30"><rect x="0" y="2" width="24" height="1.5" fill="#e8e8e8"/><rect x="4" y="5" width="20" height="1.5" fill="#e8e8e8"/><rect x="0" y="9" width="24" height="1.5" fill="#e8e8e8"/><rect x="4" y="12" width="20" height="1.5" fill="#e8e8e8"/><rect x="0" y="16" width="24" height="1.5" fill="#e8e8e8"/><rect x="4" y="20" width="20" height="1.5" fill="#e8e8e8"/><rect x="0" y="23" width="24" height="1.5" fill="#e8e8e8"/></svg>
<div class="a" style="left:3390px;top:2076px;width:14px;height:2px;background:#e0e0e0;"></div>
<div class="a" style="left:3420px;top:2076px;width:220px;height:3px;background:#1f1f1f;"></div>
<div class="a" style="left:3526px;top:2064px;width:4px;height:30px;background:#1f1f1f;"></div>
<div class="a" style="left:3518.5px;top:2068px;width:19px;height:19px;border-radius:50%;background:#fafafa"></div>
<div class="t" style="top:2066.99px;font-size:26px;color:#e8e8e8;left:3157.00px;width:1000px;text-align:center;">+</div>
<div class="t" style="top:2066.99px;font-size:26px;color:#e8e8e8;letter-spacing:0.8px;left:2777.00px;width:1000px;text-align:right;">100%</div>
<div class="t" style="top:2056.07px;font-size:20px;color:#eee;left:3304.00px;width:1000px;text-align:center;">»</div>
<div class="a" style="left:0px;top:20px;width:2px;height:2065px;background:#7e7e7e;"></div>
<svg class="a" style="left:0px;top:2080px;" width="22" height="20" viewBox="0 0 22 20"><path d="M0 0V20H22C10 20 2 12 1.5 0z" fill="#2a2630"/><path d="M1.5 0C2 12 10 19.5 22 19.5" fill="none" stroke="#8a8a8a" stroke-width="1.5"/></svg>
<svg class="a" style="left:0px;top:0px;" width="22" height="22" viewBox="0 0 22 22"><path d="M0 22V0H22C10 0 1 9 0.8 22z" fill="#3d4458"/><path d="M1 22C1 10 10 1 22 1" fill="none" stroke="#111" stroke-width="1.6"/></svg>
<svg class="a" style="left:3826px;top:0px;" width="8" height="6" viewBox="0 0 8 6"><path d="M3 0H8V6C6 4 4 2 3 0z" fill="#222"/></svg>
</body></html>
